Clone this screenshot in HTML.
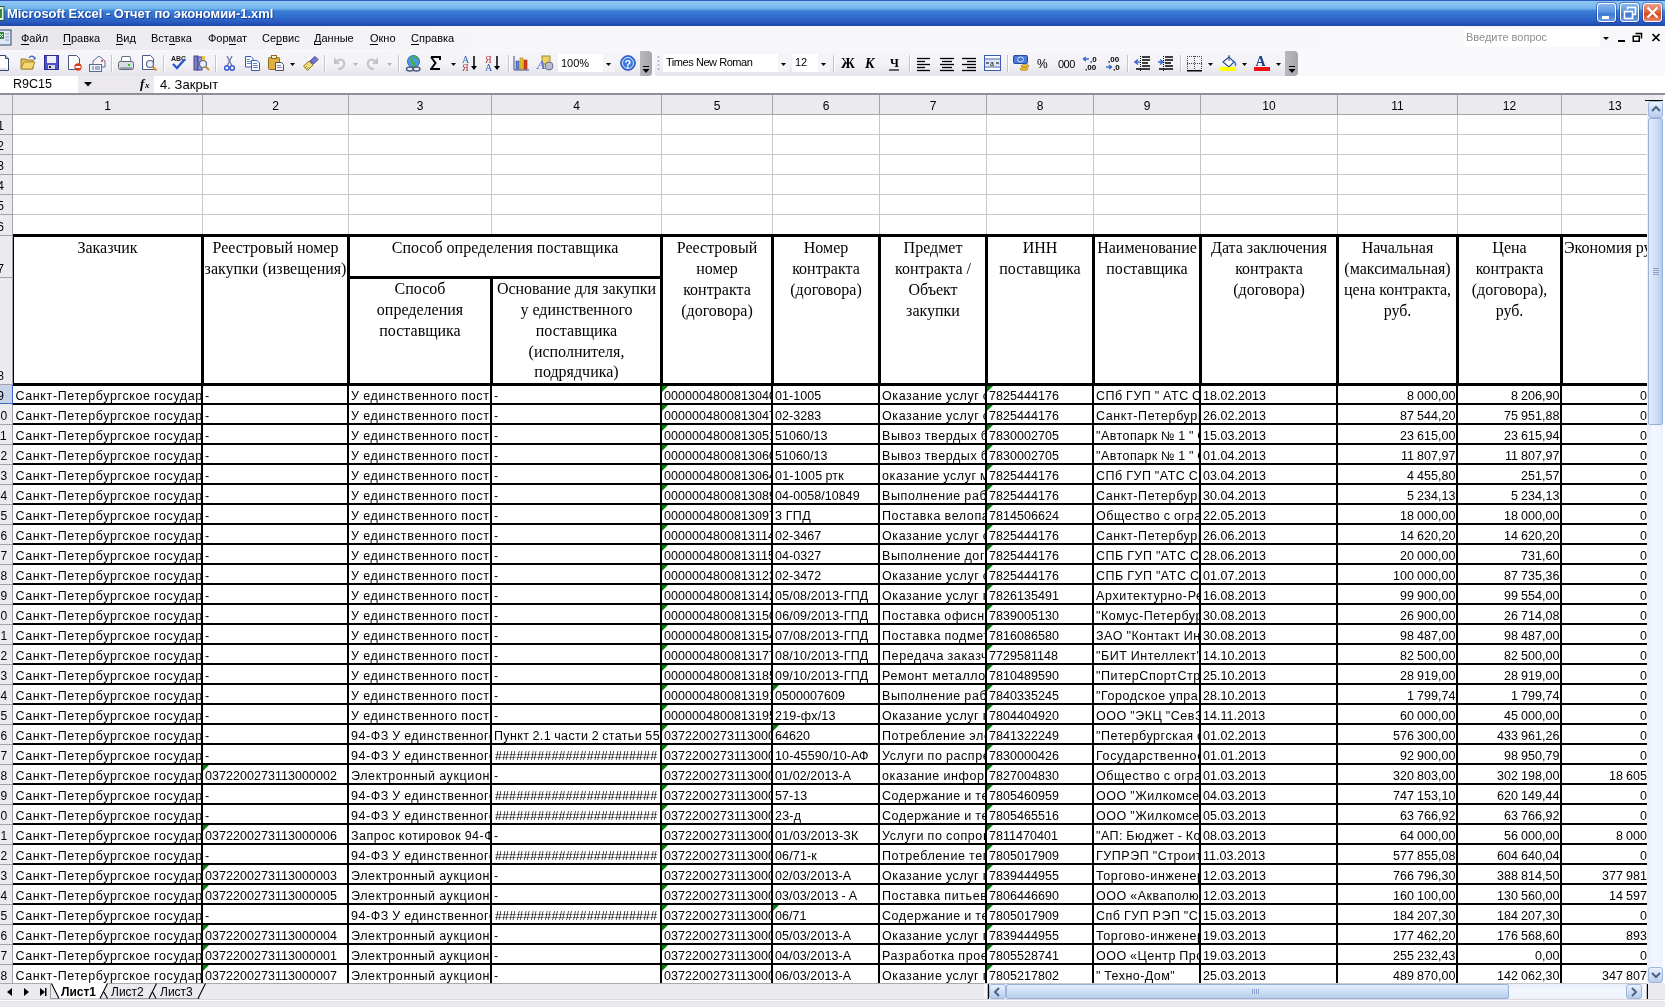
<!DOCTYPE html><html><head><meta charset="utf-8"><style>
html,body{margin:0;padding:0}
body{width:1665px;height:1007px;overflow:hidden;position:relative;background:#fff;will-change:transform;font-family:"Liberation Sans",sans-serif}
div{position:absolute;box-sizing:border-box}
svg{position:absolute}
</style></head><body>
<div style="left:0px;top:0px;width:1665px;height:26px;background:linear-gradient(#2d5cc0 0px,#2d5cc0 1px,#8ec6f3 1px,#7fbdf0 6px,#6cb0ea 9px,#4c90de 10px,#3a7fd8 11px,#3676d2 14px,#2f66c8 19px,#2a5bc0 22px,#2450b4 24px,#1f47a8 26px)"></div>
<svg style="left:0;top:6px" width="5" height="15"><rect x="-6" y="0.5" width="10" height="14" fill="#eaf2ea" stroke="#1f5f2f"/><rect x="-4" y="3" width="6" height="9" fill="#2e8b3e"/></svg>
<div style="left:7px;top:7.00px;font:bold 13px/13px 'Liberation Sans';color:#fff;white-space:nowrap;text-shadow:1px 1px 0 #1a3f95;letter-spacing:-0.05px">Microsoft Excel - Отчет по экономии-1.xml</div>
<div style="left:1597px;top:3px;width:19px;height:19px;background:linear-gradient(#8ab8ee,#5d97e0 45%,#3d78d4 60%,#6a9de0);border:1px solid #fff;border-radius:3px;box-shadow:0 0 0 1px rgba(30,60,150,.5)"></div>
<div style="left:1620px;top:3px;width:19px;height:19px;background:linear-gradient(#8ab8ee,#5d97e0 45%,#3d78d4 60%,#6a9de0);border:1px solid #fff;border-radius:3px;box-shadow:0 0 0 1px rgba(30,60,150,.5)"></div>
<div style="left:1643px;top:3px;width:19px;height:19px;background:linear-gradient(#e9a28a,#e06a47 45%,#d8461f 60%,#e98a6e);border:1px solid #fff;border-radius:3px;box-shadow:0 0 0 1px rgba(30,60,150,.5)"></div>
<svg style="left:1597px;top:3px" width="19" height="19"><rect x="5" y="13" width="7" height="3" fill="#fff"/></svg>
<svg style="left:1620px;top:3px" width="19" height="19"><rect x="4.5" y="8.5" width="8" height="7" fill="none" stroke="#fff" stroke-width="1.6"/><path d="M7.5 6.5V4.5h8v7h-2.5" fill="none" stroke="#fff" stroke-width="1.6"/></svg>
<svg style="left:1643px;top:3px" width="19" height="19"><path d="M4.5 4.5L14.5 14.5M14.5 4.5L4.5 14.5" stroke="#fff" stroke-width="2.2"/></svg>
<div style="left:0px;top:26px;width:1665px;height:24px;background:linear-gradient(90deg,#e7e5ea 0px,#f1f0f4 250px,#f7f6fa 520px,#f8f7fa 1665px)"></div>
<svg style="left:0;top:29px" width="13" height="18"><rect x="-3" y="1" width="14" height="15" fill="#dfe8f4" stroke="#31476f"/><rect x="-2" y="3" width="6" height="7" fill="#2e8b3e"/><path d="M0 5l3 3M3 5l-3 3" stroke="#fff"/><path d="M5 5h4M5 8h4M5 11h4" stroke="#8aa0c8"/></svg>
<div style="left:21px;top:32.69px;font:normal 11px/11px 'Liberation Sans';color:#000;white-space:nowrap;">Файл</div>
<div style="left:63px;top:32.69px;font:normal 11px/11px 'Liberation Sans';color:#000;white-space:nowrap;">Правка</div>
<div style="left:116px;top:32.69px;font:normal 11px/11px 'Liberation Sans';color:#000;white-space:nowrap;">Вид</div>
<div style="left:151px;top:32.69px;font:normal 11px/11px 'Liberation Sans';color:#000;white-space:nowrap;">Вставка</div>
<div style="left:208px;top:32.69px;font:normal 11px/11px 'Liberation Sans';color:#000;white-space:nowrap;">Формат</div>
<div style="left:262px;top:32.69px;font:normal 11px/11px 'Liberation Sans';color:#000;white-space:nowrap;">Сервис</div>
<div style="left:314px;top:32.69px;font:normal 11px/11px 'Liberation Sans';color:#000;white-space:nowrap;">Данные</div>
<div style="left:370px;top:32.69px;font:normal 11px/11px 'Liberation Sans';color:#000;white-space:nowrap;">Окно</div>
<div style="left:411px;top:32.69px;font:normal 11px/11px 'Liberation Sans';color:#000;white-space:nowrap;">Справка</div>
<div style="left:21px;top:44px;width:8px;height:1px;background:#000"></div>
<div style="left:63px;top:44px;width:8px;height:1px;background:#000"></div>
<div style="left:116px;top:44px;width:7px;height:1px;background:#000"></div>
<div style="left:169px;top:44px;width:6px;height:1px;background:#000"></div>
<div style="left:229px;top:44px;width:7px;height:1px;background:#000"></div>
<div style="left:276px;top:44px;width:6px;height:1px;background:#000"></div>
<div style="left:314px;top:44px;width:7px;height:1px;background:#000"></div>
<div style="left:370px;top:44px;width:8px;height:1px;background:#000"></div>
<div style="left:411px;top:44px;width:8px;height:1px;background:#000"></div>
<div style="left:1464px;top:29px;width:149px;height:18px;background:#fff"></div>
<div style="left:1600px;top:29px;width:13px;height:18px;background:#f7f6f9"></div>
<div style="left:1466px;top:31.69px;font:normal 11px/11px 'Liberation Sans';color:#8d8d8d;white-space:nowrap;">Введите вопрос</div>
<svg style="left:1600px;top:33px" width="12" height="10"><path d="M3 4h6l-3 3z" fill="#000"/></svg>
<svg style="left:1615px;top:30px" width="50" height="16"><rect x="3" y="10" width="7" height="2" fill="#000"/><path d="M20.5 3.5h6v5" fill="none" stroke="#000" stroke-width="1.5"/><rect x="18.25" y="6.25" width="6" height="5" fill="#f8f7fa" stroke="#000" stroke-width="1.5"/><path d="M37.5 4l7 7M44.5 4l-7 7" stroke="#000" stroke-width="1.7"/></svg>
<div style="left:0px;top:50px;width:1665px;height:26px;background:#f9f8fb"></div>
<div style="left:-10px;top:51px;width:662px;height:25px;background:linear-gradient(#f6f5f9,#f3f2f6 50%,#e4e3ea);border-radius:0 4px 4px 0"></div>
<div style="left:640px;top:51px;width:12px;height:25px;background:linear-gradient(90deg,#b9b8be,#a6a5ad);border-radius:0 4px 4px 0"></div>
<svg style="left:640px;top:62px" width="12" height="14"><path d="M3 4.5h6" stroke="#000"/><path d="M2.5 7h7l-3.5 4z" fill="#000"/></svg>
<div style="left:655px;top:51px;width:643px;height:25px;background:linear-gradient(#f6f5f9,#f3f2f6 50%,#e4e3ea);border-radius:3px 4px 4px 3px"></div>
<div style="left:1285px;top:51px;width:13px;height:25px;background:linear-gradient(90deg,#b9b8be,#a6a5ad);border-radius:0 4px 4px 0"></div>
<svg style="left:1286px;top:62px" width="12" height="14"><path d="M3 4.5h6" stroke="#000"/><path d="M2.5 7h7l-3.5 4z" fill="#000"/></svg>
<svg style="left:657px;top:55px" width="4" height="18"><path d="M1.5 1v2M1.5 5v2M1.5 9v2M1.5 13v2" stroke="#b0b0b8" stroke-width="1.5"/></svg>
<div style="left:111px;top:55px;width:1px;height:17px;background:#c5c4cc;box-shadow:1px 0 0 #fff"></div>
<div style="left:163px;top:55px;width:1px;height:17px;background:#c5c4cc;box-shadow:1px 0 0 #fff"></div>
<div style="left:215px;top:55px;width:1px;height:17px;background:#c5c4cc;box-shadow:1px 0 0 #fff"></div>
<div style="left:324px;top:55px;width:1px;height:17px;background:#c5c4cc;box-shadow:1px 0 0 #fff"></div>
<div style="left:398px;top:55px;width:1px;height:17px;background:#c5c4cc;box-shadow:1px 0 0 #fff"></div>
<div style="left:508px;top:55px;width:1px;height:17px;background:#c5c4cc;box-shadow:1px 0 0 #fff"></div>
<div style="left:833px;top:55px;width:1px;height:17px;background:#c5c4cc;box-shadow:1px 0 0 #fff"></div>
<div style="left:909px;top:55px;width:1px;height:17px;background:#c5c4cc;box-shadow:1px 0 0 #fff"></div>
<div style="left:1007px;top:55px;width:1px;height:17px;background:#c5c4cc;box-shadow:1px 0 0 #fff"></div>
<div style="left:1127px;top:55px;width:1px;height:17px;background:#c5c4cc;box-shadow:1px 0 0 #fff"></div>
<div style="left:1180px;top:55px;width:1px;height:17px;background:#c5c4cc;box-shadow:1px 0 0 #fff"></div>
<svg style="left:-6px;top:55px" width="16" height="16" viewBox="0 0 16 16"><path d="M1.5 .5h10l3 3v12h-13z" fill="#fff" stroke="#31456b"/><path d="M11.5 .5v3h3" fill="#dde" stroke="#31456b"/><path d="M3 14h10" stroke="#b8c4dc"/></svg>
<svg style="left:20px;top:55px" width="16" height="16" viewBox="0 0 16 16"><path d="M1 4h5l1 1h6v9H1z" fill="#e8c458" stroke="#9a7a2a"/><path d="M1 14l3-7h11l-3 7z" fill="#f6d872" stroke="#a88a32"/><path d="M9 3c2-3 5-2 6 1" fill="none" stroke="#3a6fc0" stroke-width="1.3"/><path d="M13 4l2 1 1-3" fill="#3a6fc0"/></svg>
<svg style="left:44px;top:55px" width="15" height="15" viewBox="0 0 15 15"><rect x=".5" y=".5" width="14" height="14" fill="#5050c8" stroke="#2c2c90"/><rect x="3" y="1" width="9" height="7" fill="#f0f0f8"/><rect x="4" y="10" width="7" height="4" fill="#d8d8e8"/><rect x="5" y="11" width="2" height="2" fill="#222"/></svg>
<svg style="left:68px;top:55px" width="15" height="16" viewBox="0 0 15 16"><path d="M.5 .5h8l3 3v11H.5z" fill="#fff" stroke="#4a5a80"/><circle cx="10" cy="12" r="3.7" fill="#d83a1a"/><rect x="7.5" y="11" width="5" height="2" fill="#fff"/></svg>
<svg style="left:89px;top:55px" width="17" height="17" viewBox="0 0 17 17"><path d="M4 6l6-5 6 5v6H4z" fill="#f4f4f8" stroke="#6070a0"/><circle cx="13" cy="6" r="1" fill="#e02020"/><rect x=".5" y="9.5" width="12" height="7" fill="#eef2fa" stroke="#5a6a98"/><path d="M3 12h2M6 12h5M3 14h2M6 14h5" stroke="#5a6a98"/></svg>
<svg style="left:118px;top:56px" width="16" height="15" viewBox="0 0 16 15"><path d="M4 .5h8l1 5H3z" fill="#fff" stroke="#6a7280"/><rect x=".5" y="5.5" width="15" height="8" rx="2" fill="#d8dde6" stroke="#5b6472"/><rect x="2" y="11" width="12" height="2" fill="#9aa3b0"/><rect x="10" y="8" width="2" height="2" fill="#22cc22"/></svg>
<svg style="left:142px;top:55px" width="16" height="16" viewBox="0 0 16 16"><path d="M.5 .5h8l3 3v11H.5z" fill="#fff" stroke="#4a5a80"/><circle cx="8" cy="9" r="3.5" fill="#e8f0f8" stroke="#5a6a8a" stroke-width="1.2"/><path d="M10.5 11.5l4 4" stroke="#d09030" stroke-width="2"/></svg>
<svg style="left:170px;top:54px" width="17" height="17" viewBox="0 0 17 17"><text x="1" y="7" font-family="Liberation Sans" font-size="7" font-weight="bold" fill="#222">ABC</text><path d="M3 10l4 4 8-9" fill="none" stroke="#2a5ac8" stroke-width="2.4"/></svg>
<svg style="left:193px;top:55px" width="17" height="16" viewBox="0 0 17 16"><rect x="1" y="1" width="4" height="14" fill="#7c7cc8" stroke="#44448a"/><rect x="5" y="2" width="4" height="13" fill="#9c9ce0" stroke="#44448a"/><rect x="9" y="1" width="3" height="6" fill="#e8c458"/><circle cx="10" cy="9" r="3.5" fill="#e8f0f8" stroke="#5a6a8a" stroke-width="1.2"/><path d="M12.5 11.5l3.5 3.5" stroke="#d09030" stroke-width="2"/></svg>
<svg style="left:224px;top:55px" width="11" height="16" viewBox="0 0 11 16"><path d="M3 1l5 10M8 1L3 11" stroke="#6a7a98" stroke-width="1.3"/><circle cx="2.8" cy="13" r="2.2" fill="none" stroke="#3a5ad0" stroke-width="1.5"/><circle cx="8.2" cy="13" r="2.2" fill="none" stroke="#3a5ad0" stroke-width="1.5"/></svg>
<svg style="left:245px;top:56px" width="16" height="15" viewBox="0 0 16 15"><path d="M.5 .5h5.5l2 2v8.5h-7.5z" fill="#fff" stroke="#3a5ab8"/><path d="M6.5 4.5h5.5l2.5 2.5v7.5h-8z" fill="#fff" stroke="#3a5ab8"/><path d="M2 3.5h3M2 5.5h4M2 7.5h4M8 7.5h4M8 9.5h5M8 11.5h5" stroke="#5a80e0"/></svg>
<svg style="left:268px;top:55px" width="17" height="16" viewBox="0 0 17 16"><rect x=".5" y="2.5" width="11" height="12" rx="1" fill="#e0b040" stroke="#8a6a20"/><rect x="3.5" y=".5" width="5" height="3" fill="#f8f0d0" stroke="#8a6a20"/><path d="M7.5 7.5h6l2 2v6h-8z" fill="#f8f8fc" stroke="#50505a"/><path d="M9 10.5h4M9 12.5h5" stroke="#7a8aa8"/></svg>
<svg style="left:290px;top:63px" width="6" height="4" viewBox="0 0 6 4"><path d="M0 0h5l-2.5 3z" fill="#000"/></svg>
<svg style="left:302px;top:55px" width="17" height="16" viewBox="0 0 17 16"><path d="M1.5 11l5.5-5 4 4-5.5 5.5z" fill="#f0dc78" stroke="#8a7a30"/><path d="M8 6l5-4.5 3 3L11.5 9z" fill="#7878d0" stroke="#404090"/><path d="M3 13l2-2M5 14l2-2" stroke="#c0a040"/></svg>
<svg style="left:333px;top:56px" width="13" height="14" viewBox="0 0 13 14"><path d="M4 5c4-3 8-1 7 4-1 3-4 4-6 4" fill="none" stroke="#c4c4ca" stroke-width="2.2"/><path d="M1 1v7h6z" fill="#c4c4ca"/></svg>
<svg style="left:353px;top:63px" width="6" height="4" viewBox="0 0 6 4"><path d="M0 0h5l-2.5 3z" fill="#b4b4ba"/></svg>
<svg style="left:366px;top:56px" width="13" height="14" viewBox="0 0 13 14"><path d="M9 5C5 2 1 4 2 9c1 3 4 4 6 4" fill="none" stroke="#c4c4ca" stroke-width="2.2"/><path d="M12 1v7H6z" fill="#c4c4ca"/></svg>
<svg style="left:387px;top:63px" width="6" height="4" viewBox="0 0 6 4"><path d="M0 0h5l-2.5 3z" fill="#b4b4ba"/></svg>
<svg style="left:405px;top:55px" width="17" height="17" viewBox="0 0 17 17"><circle cx="8.5" cy="6.5" r="6" fill="#4a9ae8" stroke="#2a6ab0"/><path d="M4 2.5c2 0 3 2 2.5 3.5S8 8 9.5 8.5 9 11 8 12M9 1.5c2 .5 3.5 2 3 3.5" fill="none" stroke="#4cb040" stroke-width="2.2"/><ellipse cx="5" cy="14" rx="3.5" ry="2" fill="none" stroke="#4a5a80" stroke-width="1.4"/><ellipse cx="11.5" cy="14" rx="3.5" ry="2" fill="none" stroke="#4a5a80" stroke-width="1.4"/></svg>
<svg style="left:430px;top:56px" width="11" height="14" viewBox="0 0 11 14"><path d="M1 1h9v3M10 13H1l4.5-6L1 1" fill="none" stroke="#000" stroke-width="2"/></svg>
<svg style="left:451px;top:63px" width="6" height="4" viewBox="0 0 6 4"><path d="M0 0h5l-2.5 3z" fill="#000"/></svg>
<svg style="left:462px;top:55px" width="17" height="17" viewBox="0 0 17 17"><text x="0" y="7.5" font-family="Liberation Serif" font-size="10" fill="#3060b0">A</text><text x="0" y="16" font-family="Liberation Serif" font-size="10" fill="#b04040">Я</text><path d="M12 1v13" stroke="#000" stroke-width="1.5"/><path d="M9 11l3 4 3-4z" fill="#000"/></svg>
<svg style="left:485px;top:55px" width="17" height="17" viewBox="0 0 17 17"><text x="0" y="7.5" font-family="Liberation Serif" font-size="10" fill="#b04040">Я</text><text x="0" y="16" font-family="Liberation Serif" font-size="10" fill="#3060b0">A</text><path d="M12 1v13" stroke="#000" stroke-width="1.5"/><path d="M9 11l3 4 3-4z" fill="#000"/></svg>
<svg style="left:513px;top:55px" width="17" height="16" viewBox="0 0 17 16"><path d="M1 1v14h15" fill="none" stroke="#3a4a8a"/><rect x="3" y="6" width="3" height="8" fill="#5a8ad8" stroke="#2a4a90" stroke-width=".6"/><rect x="7" y="3" width="3" height="11" fill="#f0c030" stroke="#a07a10" stroke-width=".6"/><rect x="11" y="5" width="3" height="9" fill="#d84020" stroke="#902010" stroke-width=".6"/></svg>
<svg style="left:536px;top:55px" width="18" height="16" viewBox="0 0 18 16"><rect x="6" y="1" width="8" height="8" fill="#f0d060" stroke="#a08a30"/><text x="1" y="14" font-family="Liberation Serif" font-style="italic" font-weight="bold" font-size="13" fill="#6070c8">A</text><ellipse cx="13" cy="11" rx="4" ry="4" fill="#b8c0d0" stroke="#6a7080"/></svg>
<div style="left:558px;top:54px;width:57px;height:18px;background:#fff"></div>
<div style="left:603px;top:54px;width:12px;height:18px;background:#f4f3f7"></div>
<div style="left:561px;top:57.69px;font:normal 11px/11px 'Liberation Sans';color:#000;white-space:nowrap;">100%</div>
<svg style="left:606px;top:63px" width="6" height="4" viewBox="0 0 6 4"><path d="M0 0h5l-2.5 3z" fill="#000"/></svg>
<svg style="left:620px;top:55px" width="16" height="16" viewBox="0 0 16 16"><circle cx="8" cy="8" r="7.3" fill="#3a7ae0" stroke="#1a4ab0"/><circle cx="8" cy="8" r="5.5" fill="none" stroke="#fff" stroke-width=".8"/><text x="4.6" y="12.5" font-family="Liberation Sans" font-weight="bold" font-size="11" fill="#fff">?</text></svg>
<div style="left:663px;top:54px;width:126px;height:18px;background:#fff"></div>
<div style="left:778px;top:54px;width:11px;height:18px;background:#f4f3f7"></div>
<div style="left:666px;top:56.69px;font:normal 11px/11px 'Liberation Sans';color:#000;white-space:nowrap;letter-spacing:-0.45px">Times New Roman</div>
<svg style="left:781px;top:63px" width="6" height="4" viewBox="0 0 6 4"><path d="M0 0h5l-2.5 3z" fill="#000"/></svg>
<div style="left:792px;top:54px;width:38px;height:18px;background:#fff"></div>
<div style="left:818px;top:54px;width:12px;height:18px;background:#f4f3f7"></div>
<div style="left:795px;top:56.69px;font:normal 11px/11px 'Liberation Sans';color:#000;white-space:nowrap;">12</div>
<svg style="left:821px;top:63px" width="6" height="4" viewBox="0 0 6 4"><path d="M0 0h5l-2.5 3z" fill="#000"/></svg>
<svg style="left:841px;top:56px" width="15" height="14" viewBox="0 0 15 14"><text x="0" y="12" font-family="Liberation Serif" font-weight="bold" font-size="14" fill="#000">Ж</text></svg>
<svg style="left:865px;top:56px" width="13" height="14" viewBox="0 0 13 14"><text x="0" y="12" font-family="Liberation Serif" font-weight="bold" font-style="italic" font-size="14" fill="#000">К</text></svg>
<svg style="left:889px;top:56px" width="11" height="15" viewBox="0 0 11 15"><text x="1" y="11" font-family="Liberation Serif" font-weight="bold" font-size="12" fill="#000">Ч</text><path d="M0 14h10" stroke="#000" stroke-width="1.2"/></svg>
<svg style="left:916px;top:56px" width="16" height="16" viewBox="0 0 16 16"><path d="M1 2.5H14" stroke="#000" stroke-width="1.3"/><path d="M1 5.5H9" stroke="#000" stroke-width="1.3"/><path d="M1 8.5H14" stroke="#000" stroke-width="1.3"/><path d="M1 11.5H9" stroke="#000" stroke-width="1.3"/><path d="M1 14.5H14" stroke="#000" stroke-width="1.3"/></svg>
<svg style="left:939px;top:56px" width="16" height="16" viewBox="0 0 16 16"><path d="M1 2.5H15" stroke="#000" stroke-width="1.3"/><path d="M3 5.5H13" stroke="#000" stroke-width="1.3"/><path d="M1 8.5H15" stroke="#000" stroke-width="1.3"/><path d="M3 11.5H13" stroke="#000" stroke-width="1.3"/><path d="M1 14.5H15" stroke="#000" stroke-width="1.3"/></svg>
<svg style="left:961px;top:56px" width="16" height="16" viewBox="0 0 16 16"><path d="M1 2.5H15" stroke="#000" stroke-width="1.3"/><path d="M6 5.5H15" stroke="#000" stroke-width="1.3"/><path d="M1 8.5H15" stroke="#000" stroke-width="1.3"/><path d="M6 11.5H15" stroke="#000" stroke-width="1.3"/><path d="M1 14.5H15" stroke="#000" stroke-width="1.3"/></svg>
<svg style="left:984px;top:55px" width="17" height="16" viewBox="0 0 17 16"><rect x=".5" y=".5" width="16" height="15" fill="#fff" stroke="#3a5ab0"/><path d="M1 4h15M1 12h15" stroke="#3a5ab0"/><rect x="1" y="5" width="15" height="6" fill="#dde6f8"/><text x="6" y="10.5" font-family="Liberation Sans" font-size="7" fill="#000">a</text><path d="M2 8h3M12 8h3" stroke="#000"/></svg>
<svg style="left:1013px;top:55px" width="17" height="17" viewBox="0 0 17 17"><rect x=".5" y=".5" width="14" height="8" rx="1" fill="#4a7ad8" stroke="#2a4aa0"/><ellipse cx="7.5" cy="4.5" rx="3" ry="2.5" fill="none" stroke="#cfe0ff"/><ellipse cx="12" cy="11" rx="4" ry="1.5" fill="#f0c030" stroke="#a07a10" stroke-width=".6"/><ellipse cx="11" cy="14" rx="4" ry="1.5" fill="#f0c030" stroke="#a07a10" stroke-width=".6"/></svg>
<div style="left:1037px;top:57.84px;font:normal 12px/12px 'Liberation Sans';color:#000;white-space:nowrap;">%</div>
<div style="left:1058px;top:58.69px;font:normal 11px/11px 'Liberation Sans';color:#000;white-space:nowrap;letter-spacing:-0.5px">000</div>
<svg style="left:1082px;top:55px" width="16" height="16" viewBox="0 0 16 16"><text x="8" y="7" font-family="Liberation Sans" font-size="8" font-weight="bold" fill="#000">,0</text><text x="3" y="15" font-family="Liberation Sans" font-size="8" font-weight="bold" fill="#000">,00</text><path d="M1 4h6M1 4l3-2M1 4l3 2" stroke="#3a6ad0" stroke-width="1.3" fill="none"/></svg>
<svg style="left:1105px;top:55px" width="16" height="16" viewBox="0 0 16 16"><text x="3" y="7" font-family="Liberation Sans" font-size="8" font-weight="bold" fill="#000">,00</text><text x="8" y="15" font-family="Liberation Sans" font-size="8" font-weight="bold" fill="#000">,0</text><path d="M1 12h6M7 12l-3-2M7 12l-3 2" stroke="#3a6ad0" stroke-width="1.3" fill="none"/></svg>
<svg style="left:1134px;top:55px" width="17" height="16" viewBox="0 0 17 16"><path d="M8 2h8M8 5h8M8 8h6M8 11h8M2 14h14" stroke="#000" stroke-width="1.3"/><path d="M6 7H1l3-2.5M1 7l3 2.5" stroke="#3a6ad0" stroke-width="1.5" fill="none"/><path d="M6.5 1v15" stroke="#000" stroke-dasharray="1 1"/></svg>
<svg style="left:1157px;top:55px" width="17" height="16" viewBox="0 0 17 16"><path d="M8 2h8M8 5h8M8 8h6M8 11h8M2 14h14" stroke="#000" stroke-width="1.3"/><path d="M1 7h5L3 4.5M6 7l-3 2.5" stroke="#3a6ad0" stroke-width="1.5" fill="none"/><path d="M6.5 1v15" stroke="#000" stroke-dasharray="1 1"/></svg>
<svg style="left:1187px;top:56px" width="15" height="16" viewBox="0 0 15 16"><rect x="0" y="0" width="1" height="1" fill="#444"/><rect x="0" y="0" width="1" height="1" fill="#444"/><rect x="7" y="0" width="1" height="1" fill="#444"/><rect x="0" y="7" width="1" height="1" fill="#444"/><rect x="14" y="0" width="1" height="1" fill="#444"/><rect x="0" y="14" width="1" height="1" fill="#444"/><rect x="0" y="2" width="1" height="1" fill="#444"/><rect x="2" y="0" width="1" height="1" fill="#444"/><rect x="7" y="2" width="1" height="1" fill="#444"/><rect x="2" y="7" width="1" height="1" fill="#444"/><rect x="14" y="2" width="1" height="1" fill="#444"/><rect x="2" y="14" width="1" height="1" fill="#444"/><rect x="0" y="4" width="1" height="1" fill="#444"/><rect x="4" y="0" width="1" height="1" fill="#444"/><rect x="7" y="4" width="1" height="1" fill="#444"/><rect x="4" y="7" width="1" height="1" fill="#444"/><rect x="14" y="4" width="1" height="1" fill="#444"/><rect x="4" y="14" width="1" height="1" fill="#444"/><rect x="0" y="6" width="1" height="1" fill="#444"/><rect x="6" y="0" width="1" height="1" fill="#444"/><rect x="7" y="6" width="1" height="1" fill="#444"/><rect x="6" y="7" width="1" height="1" fill="#444"/><rect x="14" y="6" width="1" height="1" fill="#444"/><rect x="6" y="14" width="1" height="1" fill="#444"/><rect x="0" y="8" width="1" height="1" fill="#444"/><rect x="8" y="0" width="1" height="1" fill="#444"/><rect x="7" y="8" width="1" height="1" fill="#444"/><rect x="8" y="7" width="1" height="1" fill="#444"/><rect x="14" y="8" width="1" height="1" fill="#444"/><rect x="8" y="14" width="1" height="1" fill="#444"/><rect x="0" y="10" width="1" height="1" fill="#444"/><rect x="10" y="0" width="1" height="1" fill="#444"/><rect x="7" y="10" width="1" height="1" fill="#444"/><rect x="10" y="7" width="1" height="1" fill="#444"/><rect x="14" y="10" width="1" height="1" fill="#444"/><rect x="10" y="14" width="1" height="1" fill="#444"/><rect x="0" y="12" width="1" height="1" fill="#444"/><rect x="12" y="0" width="1" height="1" fill="#444"/><rect x="7" y="12" width="1" height="1" fill="#444"/><rect x="12" y="7" width="1" height="1" fill="#444"/><rect x="14" y="12" width="1" height="1" fill="#444"/><rect x="12" y="14" width="1" height="1" fill="#444"/><rect x="0" y="14" width="1" height="1" fill="#444"/><rect x="14" y="0" width="1" height="1" fill="#444"/><rect x="7" y="14" width="1" height="1" fill="#444"/><rect x="14" y="7" width="1" height="1" fill="#444"/><rect x="14" y="14" width="1" height="1" fill="#444"/><rect x="14" y="14" width="1" height="1" fill="#444"/><rect x="0" y="14" width="15" height="1.5" fill="#000"/></svg>
<svg style="left:1208px;top:63px" width="6" height="4" viewBox="0 0 6 4"><path d="M0 0h5l-2.5 3z" fill="#000"/></svg>
<svg style="left:1220px;top:54px" width="17" height="17" viewBox="0 0 17 17"><path d="M3 8l6-5 5 5-5 5z" fill="#fff" stroke="#2a4a90" stroke-width="1.2"/><path d="M9 1v6" stroke="#2a4a90"/><path d="M13 7c3 1 3 4 2 5" stroke="#3a70d8" stroke-width="1.5" fill="none"/><rect x="0" y="13" width="16" height="4" fill="#ffff00"/></svg>
<svg style="left:1242px;top:63px" width="6" height="4" viewBox="0 0 6 4"><path d="M0 0h5l-2.5 3z" fill="#000"/></svg>
<svg style="left:1254px;top:54px" width="17" height="17" viewBox="0 0 17 17"><text x="1.5" y="12" font-family="Liberation Serif" font-weight="bold" font-size="14" fill="#1a3a8a">A</text><rect x="0" y="13" width="16" height="4" fill="#ee1111"/></svg>
<svg style="left:1276px;top:63px" width="6" height="4" viewBox="0 0 6 4"><path d="M0 0h5l-2.5 3z" fill="#000"/></svg>
<div style="left:0px;top:76px;width:1665px;height:17px;background:#fff"></div>
<div style="left:78px;top:76px;width:76px;height:17px;background:#ebe9ee"></div>
<div style="left:13px;top:78.02px;font:normal 12.5px/12.5px 'Liberation Sans';color:#000;white-space:nowrap;">R9C15</div>
<svg style="left:84px;top:82px" width="9" height="6" viewBox="0 0 9 6"><path d="M0 0h8l-4 4.5z" fill="#000"/></svg>
<svg style="left:140px;top:77px" width="13" height="14" viewBox="0 0 13 14"><text x="0" y="11" font-family="Liberation Serif" font-style="italic" font-weight="bold" font-size="13" fill="#000">f</text><text x="5" y="11" font-family="Liberation Serif" font-style="italic" font-weight="bold" font-size="9" fill="#000">x</text></svg>
<div style="left:160px;top:77.60px;font:normal 13px/13px 'Liberation Sans';color:#000;white-space:nowrap;letter-spacing:0.05px">4. Закрыт</div>
<div style="left:0px;top:93px;width:1665px;height:2px;background:#8f8f95"></div>
<div style="left:0px;top:95px;width:1647px;height:19px;background:#ebeaee"></div>
<div style="left:0px;top:114px;width:1647px;height:1px;background:#a3a3a8"></div>
<div style="left:202px;top:95px;width:1px;height:19px;background:#a3a3a8"></div>
<div style="left:13px;top:98.5px;width:189px;height:14px;font:12px/14px 'Liberation Sans';text-align:center;color:#000">1</div>
<div style="left:348px;top:95px;width:1px;height:19px;background:#a3a3a8"></div>
<div style="left:203px;top:98.5px;width:145px;height:14px;font:12px/14px 'Liberation Sans';text-align:center;color:#000">2</div>
<div style="left:491px;top:95px;width:1px;height:19px;background:#a3a3a8"></div>
<div style="left:349px;top:98.5px;width:142px;height:14px;font:12px/14px 'Liberation Sans';text-align:center;color:#000">3</div>
<div style="left:661px;top:95px;width:1px;height:19px;background:#a3a3a8"></div>
<div style="left:492px;top:98.5px;width:169px;height:14px;font:12px/14px 'Liberation Sans';text-align:center;color:#000">4</div>
<div style="left:772px;top:95px;width:1px;height:19px;background:#a3a3a8"></div>
<div style="left:662px;top:98.5px;width:110px;height:14px;font:12px/14px 'Liberation Sans';text-align:center;color:#000">5</div>
<div style="left:879px;top:95px;width:1px;height:19px;background:#a3a3a8"></div>
<div style="left:773px;top:98.5px;width:106px;height:14px;font:12px/14px 'Liberation Sans';text-align:center;color:#000">6</div>
<div style="left:986px;top:95px;width:1px;height:19px;background:#a3a3a8"></div>
<div style="left:880px;top:98.5px;width:106px;height:14px;font:12px/14px 'Liberation Sans';text-align:center;color:#000">7</div>
<div style="left:1093px;top:95px;width:1px;height:19px;background:#a3a3a8"></div>
<div style="left:987px;top:98.5px;width:106px;height:14px;font:12px/14px 'Liberation Sans';text-align:center;color:#000">8</div>
<div style="left:1200px;top:95px;width:1px;height:19px;background:#a3a3a8"></div>
<div style="left:1094px;top:98.5px;width:106px;height:14px;font:12px/14px 'Liberation Sans';text-align:center;color:#000">9</div>
<div style="left:1337px;top:95px;width:1px;height:19px;background:#a3a3a8"></div>
<div style="left:1201px;top:98.5px;width:136px;height:14px;font:12px/14px 'Liberation Sans';text-align:center;color:#000">10</div>
<div style="left:1457px;top:95px;width:1px;height:19px;background:#a3a3a8"></div>
<div style="left:1338px;top:98.5px;width:119px;height:14px;font:12px/14px 'Liberation Sans';text-align:center;color:#000">11</div>
<div style="left:1561px;top:95px;width:1px;height:19px;background:#a3a3a8"></div>
<div style="left:1458px;top:98.5px;width:103px;height:14px;font:12px/14px 'Liberation Sans';text-align:center;color:#000">12</div>
<div style="left:1562px;top:98.5px;width:106px;height:14px;font:12px/14px 'Liberation Sans';text-align:center;color:#000">13</div>
<div style="left:12px;top:95px;width:1px;height:19px;background:#a3a3a8"></div>
<div style="left:0px;top:115px;width:12px;height:868px;background:#ebeaee"></div>
<div style="left:12px;top:115px;width:1px;height:868px;background:#a3a3a8"></div>
<div style="left:0px;top:385px;width:12px;height:19px;background:#c7d3e9"></div>
<div style="left:12px;top:385px;width:1px;height:20px;background:#3d6ac6"></div>
<div style="left:0px;top:403px;width:13px;height:1px;background:#3d6ac6"></div>
<div style="left:0px;top:134px;width:12px;height:1px;background:#a3a3a8"></div>
<div style="left:-12.5px;top:119.0px;width:26px;height:14px;font:12px/14px 'Liberation Sans';text-align:center;color:#000;overflow:visible">1</div>
<div style="left:0px;top:154px;width:12px;height:1px;background:#a3a3a8"></div>
<div style="left:-12.5px;top:139.0px;width:26px;height:14px;font:12px/14px 'Liberation Sans';text-align:center;color:#000;overflow:visible">2</div>
<div style="left:0px;top:174px;width:12px;height:1px;background:#a3a3a8"></div>
<div style="left:-12.5px;top:159.0px;width:26px;height:14px;font:12px/14px 'Liberation Sans';text-align:center;color:#000;overflow:visible">3</div>
<div style="left:0px;top:194px;width:12px;height:1px;background:#a3a3a8"></div>
<div style="left:-12.5px;top:179.0px;width:26px;height:14px;font:12px/14px 'Liberation Sans';text-align:center;color:#000;overflow:visible">4</div>
<div style="left:0px;top:214px;width:12px;height:1px;background:#a3a3a8"></div>
<div style="left:-12.5px;top:199.0px;width:26px;height:14px;font:12px/14px 'Liberation Sans';text-align:center;color:#000;overflow:visible">5</div>
<div style="left:0px;top:235px;width:12px;height:1px;background:#a3a3a8"></div>
<div style="left:-12.5px;top:220.0px;width:26px;height:14px;font:12px/14px 'Liberation Sans';text-align:center;color:#000;overflow:visible">6</div>
<div style="left:0px;top:277px;width:12px;height:1px;background:#a3a3a8"></div>
<div style="left:-12.5px;top:262.0px;width:26px;height:14px;font:12px/14px 'Liberation Sans';text-align:center;color:#000;overflow:visible">7</div>
<div style="left:0px;top:384px;width:12px;height:1px;background:#a3a3a8"></div>
<div style="left:-12.5px;top:369.0px;width:26px;height:14px;font:12px/14px 'Liberation Sans';text-align:center;color:#000;overflow:visible">8</div>
<div style="left:-12.5px;top:389.0px;width:26px;height:14px;font:12px/14px 'Liberation Sans';text-align:center;color:#000;overflow:visible">9</div>
<div style="left:0px;top:424px;width:12px;height:1px;background:#a3a3a8"></div>
<div style="left:-12.5px;top:409.0px;width:26px;height:14px;font:12px/14px 'Liberation Sans';text-align:center;color:#000;overflow:visible">10</div>
<div style="left:0px;top:444px;width:12px;height:1px;background:#a3a3a8"></div>
<div style="left:-12.5px;top:429.0px;width:26px;height:14px;font:12px/14px 'Liberation Sans';text-align:center;color:#000;overflow:visible">11</div>
<div style="left:0px;top:464px;width:12px;height:1px;background:#a3a3a8"></div>
<div style="left:-12.5px;top:449.0px;width:26px;height:14px;font:12px/14px 'Liberation Sans';text-align:center;color:#000;overflow:visible">12</div>
<div style="left:0px;top:484px;width:12px;height:1px;background:#a3a3a8"></div>
<div style="left:-12.5px;top:469.0px;width:26px;height:14px;font:12px/14px 'Liberation Sans';text-align:center;color:#000;overflow:visible">13</div>
<div style="left:0px;top:504px;width:12px;height:1px;background:#a3a3a8"></div>
<div style="left:-12.5px;top:489.0px;width:26px;height:14px;font:12px/14px 'Liberation Sans';text-align:center;color:#000;overflow:visible">14</div>
<div style="left:0px;top:524px;width:12px;height:1px;background:#a3a3a8"></div>
<div style="left:-12.5px;top:509.0px;width:26px;height:14px;font:12px/14px 'Liberation Sans';text-align:center;color:#000;overflow:visible">15</div>
<div style="left:0px;top:544px;width:12px;height:1px;background:#a3a3a8"></div>
<div style="left:-12.5px;top:529.0px;width:26px;height:14px;font:12px/14px 'Liberation Sans';text-align:center;color:#000;overflow:visible">16</div>
<div style="left:0px;top:564px;width:12px;height:1px;background:#a3a3a8"></div>
<div style="left:-12.5px;top:549.0px;width:26px;height:14px;font:12px/14px 'Liberation Sans';text-align:center;color:#000;overflow:visible">17</div>
<div style="left:0px;top:584px;width:12px;height:1px;background:#a3a3a8"></div>
<div style="left:-12.5px;top:569.0px;width:26px;height:14px;font:12px/14px 'Liberation Sans';text-align:center;color:#000;overflow:visible">18</div>
<div style="left:0px;top:604px;width:12px;height:1px;background:#a3a3a8"></div>
<div style="left:-12.5px;top:589.0px;width:26px;height:14px;font:12px/14px 'Liberation Sans';text-align:center;color:#000;overflow:visible">19</div>
<div style="left:0px;top:624px;width:12px;height:1px;background:#a3a3a8"></div>
<div style="left:-12.5px;top:609.0px;width:26px;height:14px;font:12px/14px 'Liberation Sans';text-align:center;color:#000;overflow:visible">20</div>
<div style="left:0px;top:644px;width:12px;height:1px;background:#a3a3a8"></div>
<div style="left:-12.5px;top:629.0px;width:26px;height:14px;font:12px/14px 'Liberation Sans';text-align:center;color:#000;overflow:visible">21</div>
<div style="left:0px;top:664px;width:12px;height:1px;background:#a3a3a8"></div>
<div style="left:-12.5px;top:649.0px;width:26px;height:14px;font:12px/14px 'Liberation Sans';text-align:center;color:#000;overflow:visible">22</div>
<div style="left:0px;top:684px;width:12px;height:1px;background:#a3a3a8"></div>
<div style="left:-12.5px;top:669.0px;width:26px;height:14px;font:12px/14px 'Liberation Sans';text-align:center;color:#000;overflow:visible">23</div>
<div style="left:0px;top:704px;width:12px;height:1px;background:#a3a3a8"></div>
<div style="left:-12.5px;top:689.0px;width:26px;height:14px;font:12px/14px 'Liberation Sans';text-align:center;color:#000;overflow:visible">24</div>
<div style="left:0px;top:724px;width:12px;height:1px;background:#a3a3a8"></div>
<div style="left:-12.5px;top:709.0px;width:26px;height:14px;font:12px/14px 'Liberation Sans';text-align:center;color:#000;overflow:visible">25</div>
<div style="left:0px;top:744px;width:12px;height:1px;background:#a3a3a8"></div>
<div style="left:-12.5px;top:729.0px;width:26px;height:14px;font:12px/14px 'Liberation Sans';text-align:center;color:#000;overflow:visible">26</div>
<div style="left:0px;top:764px;width:12px;height:1px;background:#a3a3a8"></div>
<div style="left:-12.5px;top:749.0px;width:26px;height:14px;font:12px/14px 'Liberation Sans';text-align:center;color:#000;overflow:visible">27</div>
<div style="left:0px;top:784px;width:12px;height:1px;background:#a3a3a8"></div>
<div style="left:-12.5px;top:769.0px;width:26px;height:14px;font:12px/14px 'Liberation Sans';text-align:center;color:#000;overflow:visible">28</div>
<div style="left:0px;top:804px;width:12px;height:1px;background:#a3a3a8"></div>
<div style="left:-12.5px;top:789.0px;width:26px;height:14px;font:12px/14px 'Liberation Sans';text-align:center;color:#000;overflow:visible">29</div>
<div style="left:0px;top:824px;width:12px;height:1px;background:#a3a3a8"></div>
<div style="left:-12.5px;top:809.0px;width:26px;height:14px;font:12px/14px 'Liberation Sans';text-align:center;color:#000;overflow:visible">30</div>
<div style="left:0px;top:844px;width:12px;height:1px;background:#a3a3a8"></div>
<div style="left:-12.5px;top:829.0px;width:26px;height:14px;font:12px/14px 'Liberation Sans';text-align:center;color:#000;overflow:visible">31</div>
<div style="left:0px;top:864px;width:12px;height:1px;background:#a3a3a8"></div>
<div style="left:-12.5px;top:849.0px;width:26px;height:14px;font:12px/14px 'Liberation Sans';text-align:center;color:#000;overflow:visible">32</div>
<div style="left:0px;top:884px;width:12px;height:1px;background:#a3a3a8"></div>
<div style="left:-12.5px;top:869.0px;width:26px;height:14px;font:12px/14px 'Liberation Sans';text-align:center;color:#000;overflow:visible">33</div>
<div style="left:0px;top:904px;width:12px;height:1px;background:#a3a3a8"></div>
<div style="left:-12.5px;top:889.0px;width:26px;height:14px;font:12px/14px 'Liberation Sans';text-align:center;color:#000;overflow:visible">34</div>
<div style="left:0px;top:924px;width:12px;height:1px;background:#a3a3a8"></div>
<div style="left:-12.5px;top:909.0px;width:26px;height:14px;font:12px/14px 'Liberation Sans';text-align:center;color:#000;overflow:visible">35</div>
<div style="left:0px;top:944px;width:12px;height:1px;background:#a3a3a8"></div>
<div style="left:-12.5px;top:929.0px;width:26px;height:14px;font:12px/14px 'Liberation Sans';text-align:center;color:#000;overflow:visible">36</div>
<div style="left:0px;top:964px;width:12px;height:1px;background:#a3a3a8"></div>
<div style="left:-12.5px;top:949.0px;width:26px;height:14px;font:12px/14px 'Liberation Sans';text-align:center;color:#000;overflow:visible">37</div>
<div style="left:-12.5px;top:969.0px;width:26px;height:14px;font:12px/14px 'Liberation Sans';text-align:center;color:#000;overflow:visible">38</div>
<div style="left:13px;top:134px;width:1634px;height:1px;background:#c8c8cc"></div>
<div style="left:13px;top:154px;width:1634px;height:1px;background:#c8c8cc"></div>
<div style="left:13px;top:174px;width:1634px;height:1px;background:#c8c8cc"></div>
<div style="left:13px;top:194px;width:1634px;height:1px;background:#c8c8cc"></div>
<div style="left:13px;top:214px;width:1634px;height:1px;background:#c8c8cc"></div>
<div style="left:202px;top:115px;width:1px;height:120px;background:#c8c8cc"></div>
<div style="left:348px;top:115px;width:1px;height:120px;background:#c8c8cc"></div>
<div style="left:491px;top:115px;width:1px;height:120px;background:#c8c8cc"></div>
<div style="left:661px;top:115px;width:1px;height:120px;background:#c8c8cc"></div>
<div style="left:772px;top:115px;width:1px;height:120px;background:#c8c8cc"></div>
<div style="left:879px;top:115px;width:1px;height:120px;background:#c8c8cc"></div>
<div style="left:986px;top:115px;width:1px;height:120px;background:#c8c8cc"></div>
<div style="left:1093px;top:115px;width:1px;height:120px;background:#c8c8cc"></div>
<div style="left:1200px;top:115px;width:1px;height:120px;background:#c8c8cc"></div>
<div style="left:1337px;top:115px;width:1px;height:120px;background:#c8c8cc"></div>
<div style="left:1457px;top:115px;width:1px;height:120px;background:#c8c8cc"></div>
<div style="left:1561px;top:115px;width:1px;height:120px;background:#c8c8cc"></div>
<div style="left:13px;top:238.35px;width:189px;font:16px/20.9px 'Liberation Serif';text-align:center;white-space:nowrap;color:#000;">Заказчик</div>
<div style="left:203px;top:238.35px;width:145px;font:16px/20.9px 'Liberation Serif';text-align:center;white-space:nowrap;color:#000;">Реестровый номер<br>закупки (извещения)</div>
<div style="left:349px;top:238.35px;width:312px;font:16px/20.9px 'Liberation Serif';text-align:center;white-space:nowrap;color:#000;">Способ определения поставщика</div>
<div style="left:349px;top:278.85px;width:142px;font:16px/20.9px 'Liberation Serif';text-align:center;white-space:nowrap;color:#000;">Способ<br>определения<br>поставщика</div>
<div style="left:492px;top:278.85px;width:169px;font:16px/20.9px 'Liberation Serif';text-align:center;white-space:nowrap;color:#000;">Основание для закупки<br>у единственного<br>поставщика<br>(исполнителя,<br>подрядчика)</div>
<div style="left:662px;top:238.35px;width:110px;font:16px/20.9px 'Liberation Serif';text-align:center;white-space:nowrap;color:#000;">Реестровый<br>номер<br>контракта<br>(договора)</div>
<div style="left:773px;top:238.35px;width:106px;font:16px/20.9px 'Liberation Serif';text-align:center;white-space:nowrap;color:#000;">Номер<br>контракта<br>(договора)</div>
<div style="left:880px;top:238.35px;width:106px;font:16px/20.9px 'Liberation Serif';text-align:center;white-space:nowrap;color:#000;">Предмет<br>контракта /<br>Объект<br>закупки</div>
<div style="left:987px;top:238.35px;width:106px;font:16px/20.9px 'Liberation Serif';text-align:center;white-space:nowrap;color:#000;">ИНН<br>поставщика</div>
<div style="left:1090px;top:238.35px;width:114px;font:16px/20.9px 'Liberation Serif';text-align:center;white-space:nowrap;color:#000;">Наименование<br>поставщика</div>
<div style="left:1201px;top:238.35px;width:136px;font:16px/20.9px 'Liberation Serif';text-align:center;white-space:nowrap;color:#000;">Дата заключения<br>контракта<br>(договора)</div>
<div style="left:1338px;top:238.35px;width:119px;font:16px/20.9px 'Liberation Serif';text-align:center;white-space:nowrap;color:#000;">Начальная<br>(максимальная)<br>цена контракта,<br>руб.</div>
<div style="left:1458px;top:238.35px;width:103px;font:16px/20.9px 'Liberation Serif';text-align:center;white-space:nowrap;color:#000;">Цена<br>контракта<br>(договора),<br>руб.</div>
<div style="left:1562px;top:238.35px;width:85px;height:40px;overflow:hidden"><div style="left:2px;top:0;font:16px/20.9px 'Liberation Serif';white-space:nowrap">Экономия руб.</div></div>
<div style="left:13px;top:234px;width:1634px;height:3px;background:#000"></div>
<div style="left:13px;top:383px;width:1634px;height:3px;background:#000"></div>
<div style="left:347px;top:276px;width:315px;height:3px;background:#000"></div>
<div style="left:13px;top:234px;width:1px;height:152px;background:#000"></div>
<div style="left:201px;top:234px;width:3px;height:152px;background:#000"></div>
<div style="left:347px;top:234px;width:3px;height:152px;background:#000"></div>
<div style="left:490px;top:276px;width:3px;height:110px;background:#000"></div>
<div style="left:660px;top:234px;width:3px;height:152px;background:#000"></div>
<div style="left:771px;top:234px;width:3px;height:152px;background:#000"></div>
<div style="left:878px;top:234px;width:3px;height:152px;background:#000"></div>
<div style="left:985px;top:234px;width:3px;height:152px;background:#000"></div>
<div style="left:1092px;top:234px;width:3px;height:152px;background:#000"></div>
<div style="left:1199px;top:234px;width:3px;height:152px;background:#000"></div>
<div style="left:1336px;top:234px;width:3px;height:152px;background:#000"></div>
<div style="left:1456px;top:234px;width:3px;height:152px;background:#000"></div>
<div style="left:1560px;top:234px;width:3px;height:152px;background:#000"></div>
<div style="left:13px;top:388.27px;width:188px;height:16px;overflow:hidden;font:12.5px/16px 'Liberation Sans';letter-spacing:0.61px;word-spacing:-0.6px"><div style="left:2.5px;top:0;white-space:nowrap">Санкт-Петербургское государственное бюджетное учреждение</div></div>
<div style="left:203px;top:388.27px;width:144px;height:16px;overflow:hidden;font:12.5px/16px 'Liberation Sans';letter-spacing:0.05px;word-spacing:-0.6px"><div style="left:2px;top:0;white-space:nowrap">-</div></div>
<div style="left:349px;top:388.27px;width:141px;height:16px;overflow:hidden;font:12.5px/16px 'Liberation Sans';letter-spacing:0.70px;word-spacing:-0.6px"><div style="left:2px;top:0;white-space:nowrap">У единственного поставщика</div></div>
<div style="left:492px;top:388.27px;width:168px;height:16px;overflow:hidden;font:12.5px/16px 'Liberation Sans';letter-spacing:0.05px;word-spacing:-0.6px"><div style="left:2px;top:0;white-space:nowrap">-</div></div>
<div style="left:662px;top:388.27px;width:109px;height:16px;overflow:hidden;font:12.5px/16px 'Liberation Sans';letter-spacing:0.05px;word-spacing:-0.6px"><div style="left:2px;top:0;white-space:nowrap">0000004800813040001</div></div>
<div style="left:773px;top:388.27px;width:105px;height:16px;overflow:hidden;font:12.5px/16px 'Liberation Sans';letter-spacing:0.05px;word-spacing:-0.6px"><div style="left:2px;top:0;white-space:nowrap">01-1005</div></div>
<div style="left:880px;top:388.27px;width:105px;height:16px;overflow:hidden;font:12.5px/16px 'Liberation Sans';letter-spacing:0.59px;word-spacing:-0.6px"><div style="left:2px;top:0;white-space:nowrap">Оказание услуг связи</div></div>
<div style="left:987px;top:388.27px;width:105px;height:16px;overflow:hidden;font:12.5px/16px 'Liberation Sans';letter-spacing:0.05px;word-spacing:-0.6px"><div style="left:2px;top:0;white-space:nowrap">7825444176</div></div>
<div style="left:1094px;top:388.27px;width:105px;height:16px;overflow:hidden;font:12.5px/16px 'Liberation Sans';letter-spacing:0.52px;word-spacing:-0.6px"><div style="left:2px;top:0;white-space:nowrap">СПб ГУП &quot; АТС Смольнинская&quot;</div></div>
<div style="left:1201px;top:388.27px;width:135px;height:16px;overflow:hidden;font:12.5px/16px 'Liberation Sans';letter-spacing:0.05px;word-spacing:-0.6px"><div style="left:2px;top:0;white-space:nowrap">18.02.2013</div></div>
<div style="left:1338px;top:388.27px;width:118px;height:16px;overflow:hidden;font:12.5px/16px 'Liberation Sans';letter-spacing:0.05px;word-spacing:-0.6px"><div style="right:0.5px;top:0;white-space:nowrap">8 000,00</div></div>
<div style="left:1458px;top:388.27px;width:102px;height:16px;overflow:hidden;font:12.5px/16px 'Liberation Sans';letter-spacing:0.05px;word-spacing:-0.6px"><div style="right:0.5px;top:0;white-space:nowrap">8 206,90</div></div>
<div style="left:1562px;top:388.27px;width:85px;height:16px;overflow:hidden;font:12.5px/16px 'Liberation Sans';letter-spacing:0.05px;word-spacing:-0.6px"><div style="right:0px;top:0;white-space:nowrap">0</div></div>
<svg style="left:662px;top:386px" width="6" height="6"><path d="M0 0h6L0 6z" fill="#008000"/></svg>
<svg style="left:987px;top:386px" width="6" height="6"><path d="M0 0h6L0 6z" fill="#008000"/></svg>
<div style="left:13px;top:408.27px;width:188px;height:16px;overflow:hidden;font:12.5px/16px 'Liberation Sans';letter-spacing:0.61px;word-spacing:-0.6px"><div style="left:2.5px;top:0;white-space:nowrap">Санкт-Петербургское государственное бюджетное учреждение</div></div>
<div style="left:203px;top:408.27px;width:144px;height:16px;overflow:hidden;font:12.5px/16px 'Liberation Sans';letter-spacing:0.05px;word-spacing:-0.6px"><div style="left:2px;top:0;white-space:nowrap">-</div></div>
<div style="left:349px;top:408.27px;width:141px;height:16px;overflow:hidden;font:12.5px/16px 'Liberation Sans';letter-spacing:0.70px;word-spacing:-0.6px"><div style="left:2px;top:0;white-space:nowrap">У единственного поставщика</div></div>
<div style="left:492px;top:408.27px;width:168px;height:16px;overflow:hidden;font:12.5px/16px 'Liberation Sans';letter-spacing:0.05px;word-spacing:-0.6px"><div style="left:2px;top:0;white-space:nowrap">-</div></div>
<div style="left:662px;top:408.27px;width:109px;height:16px;overflow:hidden;font:12.5px/16px 'Liberation Sans';letter-spacing:0.05px;word-spacing:-0.6px"><div style="left:2px;top:0;white-space:nowrap">0000004800813047001</div></div>
<div style="left:773px;top:408.27px;width:105px;height:16px;overflow:hidden;font:12.5px/16px 'Liberation Sans';letter-spacing:0.05px;word-spacing:-0.6px"><div style="left:2px;top:0;white-space:nowrap">02-3283</div></div>
<div style="left:880px;top:408.27px;width:105px;height:16px;overflow:hidden;font:12.5px/16px 'Liberation Sans';letter-spacing:0.59px;word-spacing:-0.6px"><div style="left:2px;top:0;white-space:nowrap">Оказание услуг связи</div></div>
<div style="left:987px;top:408.27px;width:105px;height:16px;overflow:hidden;font:12.5px/16px 'Liberation Sans';letter-spacing:0.05px;word-spacing:-0.6px"><div style="left:2px;top:0;white-space:nowrap">7825444176</div></div>
<div style="left:1094px;top:408.27px;width:105px;height:16px;overflow:hidden;font:12.5px/16px 'Liberation Sans';letter-spacing:0.60px;word-spacing:-0.6px"><div style="left:2px;top:0;white-space:nowrap">Санкт-Петербургское ГУП</div></div>
<div style="left:1201px;top:408.27px;width:135px;height:16px;overflow:hidden;font:12.5px/16px 'Liberation Sans';letter-spacing:0.05px;word-spacing:-0.6px"><div style="left:2px;top:0;white-space:nowrap">26.02.2013</div></div>
<div style="left:1338px;top:408.27px;width:118px;height:16px;overflow:hidden;font:12.5px/16px 'Liberation Sans';letter-spacing:0.05px;word-spacing:-0.6px"><div style="right:0.5px;top:0;white-space:nowrap">87 544,20</div></div>
<div style="left:1458px;top:408.27px;width:102px;height:16px;overflow:hidden;font:12.5px/16px 'Liberation Sans';letter-spacing:0.05px;word-spacing:-0.6px"><div style="right:0.5px;top:0;white-space:nowrap">75 951,88</div></div>
<div style="left:1562px;top:408.27px;width:85px;height:16px;overflow:hidden;font:12.5px/16px 'Liberation Sans';letter-spacing:0.05px;word-spacing:-0.6px"><div style="right:0px;top:0;white-space:nowrap">0</div></div>
<svg style="left:662px;top:405px" width="6" height="6"><path d="M0 0h6L0 6z" fill="#008000"/></svg>
<svg style="left:987px;top:405px" width="6" height="6"><path d="M0 0h6L0 6z" fill="#008000"/></svg>
<div style="left:13px;top:428.27px;width:188px;height:16px;overflow:hidden;font:12.5px/16px 'Liberation Sans';letter-spacing:0.61px;word-spacing:-0.6px"><div style="left:2.5px;top:0;white-space:nowrap">Санкт-Петербургское государственное бюджетное учреждение</div></div>
<div style="left:203px;top:428.27px;width:144px;height:16px;overflow:hidden;font:12.5px/16px 'Liberation Sans';letter-spacing:0.05px;word-spacing:-0.6px"><div style="left:2px;top:0;white-space:nowrap">-</div></div>
<div style="left:349px;top:428.27px;width:141px;height:16px;overflow:hidden;font:12.5px/16px 'Liberation Sans';letter-spacing:0.70px;word-spacing:-0.6px"><div style="left:2px;top:0;white-space:nowrap">У единственного поставщика</div></div>
<div style="left:492px;top:428.27px;width:168px;height:16px;overflow:hidden;font:12.5px/16px 'Liberation Sans';letter-spacing:0.05px;word-spacing:-0.6px"><div style="left:2px;top:0;white-space:nowrap">-</div></div>
<div style="left:662px;top:428.27px;width:109px;height:16px;overflow:hidden;font:12.5px/16px 'Liberation Sans';letter-spacing:0.05px;word-spacing:-0.6px"><div style="left:2px;top:0;white-space:nowrap">0000004800813051001</div></div>
<div style="left:773px;top:428.27px;width:105px;height:16px;overflow:hidden;font:12.5px/16px 'Liberation Sans';letter-spacing:0.05px;word-spacing:-0.6px"><div style="left:2px;top:0;white-space:nowrap">51060/13</div></div>
<div style="left:880px;top:428.27px;width:105px;height:16px;overflow:hidden;font:12.5px/16px 'Liberation Sans';letter-spacing:0.59px;word-spacing:-0.6px"><div style="left:2px;top:0;white-space:nowrap">Вывоз твердых бытовых отходов</div></div>
<div style="left:987px;top:428.27px;width:105px;height:16px;overflow:hidden;font:12.5px/16px 'Liberation Sans';letter-spacing:0.05px;word-spacing:-0.6px"><div style="left:2px;top:0;white-space:nowrap">7830002705</div></div>
<div style="left:1094px;top:428.27px;width:105px;height:16px;overflow:hidden;font:12.5px/16px 'Liberation Sans';letter-spacing:0.44px;word-spacing:-0.6px"><div style="left:2px;top:0;white-space:nowrap">&quot;Автопарк № 1 &quot; Спецтранс&quot;</div></div>
<div style="left:1201px;top:428.27px;width:135px;height:16px;overflow:hidden;font:12.5px/16px 'Liberation Sans';letter-spacing:0.05px;word-spacing:-0.6px"><div style="left:2px;top:0;white-space:nowrap">15.03.2013</div></div>
<div style="left:1338px;top:428.27px;width:118px;height:16px;overflow:hidden;font:12.5px/16px 'Liberation Sans';letter-spacing:0.05px;word-spacing:-0.6px"><div style="right:0.5px;top:0;white-space:nowrap">23 615,00</div></div>
<div style="left:1458px;top:428.27px;width:102px;height:16px;overflow:hidden;font:12.5px/16px 'Liberation Sans';letter-spacing:0.05px;word-spacing:-0.6px"><div style="right:0.5px;top:0;white-space:nowrap">23 615,94</div></div>
<div style="left:1562px;top:428.27px;width:85px;height:16px;overflow:hidden;font:12.5px/16px 'Liberation Sans';letter-spacing:0.05px;word-spacing:-0.6px"><div style="right:0px;top:0;white-space:nowrap">0</div></div>
<svg style="left:662px;top:425px" width="6" height="6"><path d="M0 0h6L0 6z" fill="#008000"/></svg>
<svg style="left:987px;top:425px" width="6" height="6"><path d="M0 0h6L0 6z" fill="#008000"/></svg>
<div style="left:13px;top:448.27px;width:188px;height:16px;overflow:hidden;font:12.5px/16px 'Liberation Sans';letter-spacing:0.61px;word-spacing:-0.6px"><div style="left:2.5px;top:0;white-space:nowrap">Санкт-Петербургское государственное бюджетное учреждение</div></div>
<div style="left:203px;top:448.27px;width:144px;height:16px;overflow:hidden;font:12.5px/16px 'Liberation Sans';letter-spacing:0.05px;word-spacing:-0.6px"><div style="left:2px;top:0;white-space:nowrap">-</div></div>
<div style="left:349px;top:448.27px;width:141px;height:16px;overflow:hidden;font:12.5px/16px 'Liberation Sans';letter-spacing:0.70px;word-spacing:-0.6px"><div style="left:2px;top:0;white-space:nowrap">У единственного поставщика</div></div>
<div style="left:492px;top:448.27px;width:168px;height:16px;overflow:hidden;font:12.5px/16px 'Liberation Sans';letter-spacing:0.05px;word-spacing:-0.6px"><div style="left:2px;top:0;white-space:nowrap">-</div></div>
<div style="left:662px;top:448.27px;width:109px;height:16px;overflow:hidden;font:12.5px/16px 'Liberation Sans';letter-spacing:0.05px;word-spacing:-0.6px"><div style="left:2px;top:0;white-space:nowrap">0000004800813060001</div></div>
<div style="left:773px;top:448.27px;width:105px;height:16px;overflow:hidden;font:12.5px/16px 'Liberation Sans';letter-spacing:0.05px;word-spacing:-0.6px"><div style="left:2px;top:0;white-space:nowrap">51060/13</div></div>
<div style="left:880px;top:448.27px;width:105px;height:16px;overflow:hidden;font:12.5px/16px 'Liberation Sans';letter-spacing:0.59px;word-spacing:-0.6px"><div style="left:2px;top:0;white-space:nowrap">Вывоз твердых бытовых отходов</div></div>
<div style="left:987px;top:448.27px;width:105px;height:16px;overflow:hidden;font:12.5px/16px 'Liberation Sans';letter-spacing:0.05px;word-spacing:-0.6px"><div style="left:2px;top:0;white-space:nowrap">7830002705</div></div>
<div style="left:1094px;top:448.27px;width:105px;height:16px;overflow:hidden;font:12.5px/16px 'Liberation Sans';letter-spacing:0.44px;word-spacing:-0.6px"><div style="left:2px;top:0;white-space:nowrap">&quot;Автопарк № 1 &quot; Спецтранс&quot;</div></div>
<div style="left:1201px;top:448.27px;width:135px;height:16px;overflow:hidden;font:12.5px/16px 'Liberation Sans';letter-spacing:0.05px;word-spacing:-0.6px"><div style="left:2px;top:0;white-space:nowrap">01.04.2013</div></div>
<div style="left:1338px;top:448.27px;width:118px;height:16px;overflow:hidden;font:12.5px/16px 'Liberation Sans';letter-spacing:0.05px;word-spacing:-0.6px"><div style="right:0.5px;top:0;white-space:nowrap">11 807,97</div></div>
<div style="left:1458px;top:448.27px;width:102px;height:16px;overflow:hidden;font:12.5px/16px 'Liberation Sans';letter-spacing:0.05px;word-spacing:-0.6px"><div style="right:0.5px;top:0;white-space:nowrap">11 807,97</div></div>
<div style="left:1562px;top:448.27px;width:85px;height:16px;overflow:hidden;font:12.5px/16px 'Liberation Sans';letter-spacing:0.05px;word-spacing:-0.6px"><div style="right:0px;top:0;white-space:nowrap">0</div></div>
<svg style="left:662px;top:445px" width="6" height="6"><path d="M0 0h6L0 6z" fill="#008000"/></svg>
<svg style="left:987px;top:445px" width="6" height="6"><path d="M0 0h6L0 6z" fill="#008000"/></svg>
<div style="left:13px;top:468.27px;width:188px;height:16px;overflow:hidden;font:12.5px/16px 'Liberation Sans';letter-spacing:0.61px;word-spacing:-0.6px"><div style="left:2.5px;top:0;white-space:nowrap">Санкт-Петербургское государственное бюджетное учреждение</div></div>
<div style="left:203px;top:468.27px;width:144px;height:16px;overflow:hidden;font:12.5px/16px 'Liberation Sans';letter-spacing:0.05px;word-spacing:-0.6px"><div style="left:2px;top:0;white-space:nowrap">-</div></div>
<div style="left:349px;top:468.27px;width:141px;height:16px;overflow:hidden;font:12.5px/16px 'Liberation Sans';letter-spacing:0.70px;word-spacing:-0.6px"><div style="left:2px;top:0;white-space:nowrap">У единственного поставщика</div></div>
<div style="left:492px;top:468.27px;width:168px;height:16px;overflow:hidden;font:12.5px/16px 'Liberation Sans';letter-spacing:0.05px;word-spacing:-0.6px"><div style="left:2px;top:0;white-space:nowrap">-</div></div>
<div style="left:662px;top:468.27px;width:109px;height:16px;overflow:hidden;font:12.5px/16px 'Liberation Sans';letter-spacing:0.05px;word-spacing:-0.6px"><div style="left:2px;top:0;white-space:nowrap">0000004800813064001</div></div>
<div style="left:773px;top:468.27px;width:105px;height:16px;overflow:hidden;font:12.5px/16px 'Liberation Sans';letter-spacing:0.21px;word-spacing:-0.6px"><div style="left:2px;top:0;white-space:nowrap">01-1005 ртк</div></div>
<div style="left:880px;top:468.27px;width:105px;height:16px;overflow:hidden;font:12.5px/16px 'Liberation Sans';letter-spacing:0.59px;word-spacing:-0.6px"><div style="left:2px;top:0;white-space:nowrap">оказание услуг местной связи</div></div>
<div style="left:987px;top:468.27px;width:105px;height:16px;overflow:hidden;font:12.5px/16px 'Liberation Sans';letter-spacing:0.05px;word-spacing:-0.6px"><div style="left:2px;top:0;white-space:nowrap">7825444176</div></div>
<div style="left:1094px;top:468.27px;width:105px;height:16px;overflow:hidden;font:12.5px/16px 'Liberation Sans';letter-spacing:0.53px;word-spacing:-0.6px"><div style="left:2px;top:0;white-space:nowrap">СПб ГУП &quot;АТС Смольнинская&quot;</div></div>
<div style="left:1201px;top:468.27px;width:135px;height:16px;overflow:hidden;font:12.5px/16px 'Liberation Sans';letter-spacing:0.05px;word-spacing:-0.6px"><div style="left:2px;top:0;white-space:nowrap">03.04.2013</div></div>
<div style="left:1338px;top:468.27px;width:118px;height:16px;overflow:hidden;font:12.5px/16px 'Liberation Sans';letter-spacing:0.05px;word-spacing:-0.6px"><div style="right:0.5px;top:0;white-space:nowrap">4 455,80</div></div>
<div style="left:1458px;top:468.27px;width:102px;height:16px;overflow:hidden;font:12.5px/16px 'Liberation Sans';letter-spacing:0.05px;word-spacing:-0.6px"><div style="right:0.5px;top:0;white-space:nowrap">251,57</div></div>
<div style="left:1562px;top:468.27px;width:85px;height:16px;overflow:hidden;font:12.5px/16px 'Liberation Sans';letter-spacing:0.05px;word-spacing:-0.6px"><div style="right:0px;top:0;white-space:nowrap">0</div></div>
<svg style="left:662px;top:465px" width="6" height="6"><path d="M0 0h6L0 6z" fill="#008000"/></svg>
<svg style="left:987px;top:465px" width="6" height="6"><path d="M0 0h6L0 6z" fill="#008000"/></svg>
<div style="left:13px;top:488.27px;width:188px;height:16px;overflow:hidden;font:12.5px/16px 'Liberation Sans';letter-spacing:0.61px;word-spacing:-0.6px"><div style="left:2.5px;top:0;white-space:nowrap">Санкт-Петербургское государственное бюджетное учреждение</div></div>
<div style="left:203px;top:488.27px;width:144px;height:16px;overflow:hidden;font:12.5px/16px 'Liberation Sans';letter-spacing:0.05px;word-spacing:-0.6px"><div style="left:2px;top:0;white-space:nowrap">-</div></div>
<div style="left:349px;top:488.27px;width:141px;height:16px;overflow:hidden;font:12.5px/16px 'Liberation Sans';letter-spacing:0.70px;word-spacing:-0.6px"><div style="left:2px;top:0;white-space:nowrap">У единственного поставщика</div></div>
<div style="left:492px;top:488.27px;width:168px;height:16px;overflow:hidden;font:12.5px/16px 'Liberation Sans';letter-spacing:0.05px;word-spacing:-0.6px"><div style="left:2px;top:0;white-space:nowrap">-</div></div>
<div style="left:662px;top:488.27px;width:109px;height:16px;overflow:hidden;font:12.5px/16px 'Liberation Sans';letter-spacing:0.05px;word-spacing:-0.6px"><div style="left:2px;top:0;white-space:nowrap">0000004800813089001</div></div>
<div style="left:773px;top:488.27px;width:105px;height:16px;overflow:hidden;font:12.5px/16px 'Liberation Sans';letter-spacing:0.05px;word-spacing:-0.6px"><div style="left:2px;top:0;white-space:nowrap">04-0058/10849</div></div>
<div style="left:880px;top:488.27px;width:105px;height:16px;overflow:hidden;font:12.5px/16px 'Liberation Sans';letter-spacing:0.61px;word-spacing:-0.6px"><div style="left:2px;top:0;white-space:nowrap">Выполнение работ</div></div>
<div style="left:987px;top:488.27px;width:105px;height:16px;overflow:hidden;font:12.5px/16px 'Liberation Sans';letter-spacing:0.05px;word-spacing:-0.6px"><div style="left:2px;top:0;white-space:nowrap">7825444176</div></div>
<div style="left:1094px;top:488.27px;width:105px;height:16px;overflow:hidden;font:12.5px/16px 'Liberation Sans';letter-spacing:0.60px;word-spacing:-0.6px"><div style="left:2px;top:0;white-space:nowrap">Санкт-Петербургское ГУП</div></div>
<div style="left:1201px;top:488.27px;width:135px;height:16px;overflow:hidden;font:12.5px/16px 'Liberation Sans';letter-spacing:0.05px;word-spacing:-0.6px"><div style="left:2px;top:0;white-space:nowrap">30.04.2013</div></div>
<div style="left:1338px;top:488.27px;width:118px;height:16px;overflow:hidden;font:12.5px/16px 'Liberation Sans';letter-spacing:0.05px;word-spacing:-0.6px"><div style="right:0.5px;top:0;white-space:nowrap">5 234,13</div></div>
<div style="left:1458px;top:488.27px;width:102px;height:16px;overflow:hidden;font:12.5px/16px 'Liberation Sans';letter-spacing:0.05px;word-spacing:-0.6px"><div style="right:0.5px;top:0;white-space:nowrap">5 234,13</div></div>
<div style="left:1562px;top:488.27px;width:85px;height:16px;overflow:hidden;font:12.5px/16px 'Liberation Sans';letter-spacing:0.05px;word-spacing:-0.6px"><div style="right:0px;top:0;white-space:nowrap">0</div></div>
<svg style="left:662px;top:485px" width="6" height="6"><path d="M0 0h6L0 6z" fill="#008000"/></svg>
<svg style="left:987px;top:485px" width="6" height="6"><path d="M0 0h6L0 6z" fill="#008000"/></svg>
<div style="left:13px;top:508.27px;width:188px;height:16px;overflow:hidden;font:12.5px/16px 'Liberation Sans';letter-spacing:0.61px;word-spacing:-0.6px"><div style="left:2.5px;top:0;white-space:nowrap">Санкт-Петербургское государственное бюджетное учреждение</div></div>
<div style="left:203px;top:508.27px;width:144px;height:16px;overflow:hidden;font:12.5px/16px 'Liberation Sans';letter-spacing:0.05px;word-spacing:-0.6px"><div style="left:2px;top:0;white-space:nowrap">-</div></div>
<div style="left:349px;top:508.27px;width:141px;height:16px;overflow:hidden;font:12.5px/16px 'Liberation Sans';letter-spacing:0.70px;word-spacing:-0.6px"><div style="left:2px;top:0;white-space:nowrap">У единственного поставщика</div></div>
<div style="left:492px;top:508.27px;width:168px;height:16px;overflow:hidden;font:12.5px/16px 'Liberation Sans';letter-spacing:0.05px;word-spacing:-0.6px"><div style="left:2px;top:0;white-space:nowrap">-</div></div>
<div style="left:662px;top:508.27px;width:109px;height:16px;overflow:hidden;font:12.5px/16px 'Liberation Sans';letter-spacing:0.05px;word-spacing:-0.6px"><div style="left:2px;top:0;white-space:nowrap">0000004800813097001</div></div>
<div style="left:773px;top:508.27px;width:105px;height:16px;overflow:hidden;font:12.5px/16px 'Liberation Sans';letter-spacing:0.41px;word-spacing:-0.6px"><div style="left:2px;top:0;white-space:nowrap">3 ГПД</div></div>
<div style="left:880px;top:508.27px;width:105px;height:16px;overflow:hidden;font:12.5px/16px 'Liberation Sans';letter-spacing:0.62px;word-spacing:-0.6px"><div style="left:2px;top:0;white-space:nowrap">Поставка велопарковок</div></div>
<div style="left:987px;top:508.27px;width:105px;height:16px;overflow:hidden;font:12.5px/16px 'Liberation Sans';letter-spacing:0.05px;word-spacing:-0.6px"><div style="left:2px;top:0;white-space:nowrap">7814506624</div></div>
<div style="left:1094px;top:508.27px;width:105px;height:16px;overflow:hidden;font:12.5px/16px 'Liberation Sans';letter-spacing:0.60px;word-spacing:-0.6px"><div style="left:2px;top:0;white-space:nowrap">Общество с ограниченной</div></div>
<div style="left:1201px;top:508.27px;width:135px;height:16px;overflow:hidden;font:12.5px/16px 'Liberation Sans';letter-spacing:0.05px;word-spacing:-0.6px"><div style="left:2px;top:0;white-space:nowrap">22.05.2013</div></div>
<div style="left:1338px;top:508.27px;width:118px;height:16px;overflow:hidden;font:12.5px/16px 'Liberation Sans';letter-spacing:0.05px;word-spacing:-0.6px"><div style="right:0.5px;top:0;white-space:nowrap">18 000,00</div></div>
<div style="left:1458px;top:508.27px;width:102px;height:16px;overflow:hidden;font:12.5px/16px 'Liberation Sans';letter-spacing:0.05px;word-spacing:-0.6px"><div style="right:0.5px;top:0;white-space:nowrap">18 000,00</div></div>
<div style="left:1562px;top:508.27px;width:85px;height:16px;overflow:hidden;font:12.5px/16px 'Liberation Sans';letter-spacing:0.05px;word-spacing:-0.6px"><div style="right:0px;top:0;white-space:nowrap">0</div></div>
<svg style="left:662px;top:505px" width="6" height="6"><path d="M0 0h6L0 6z" fill="#008000"/></svg>
<svg style="left:987px;top:505px" width="6" height="6"><path d="M0 0h6L0 6z" fill="#008000"/></svg>
<div style="left:13px;top:528.27px;width:188px;height:16px;overflow:hidden;font:12.5px/16px 'Liberation Sans';letter-spacing:0.61px;word-spacing:-0.6px"><div style="left:2.5px;top:0;white-space:nowrap">Санкт-Петербургское государственное бюджетное учреждение</div></div>
<div style="left:203px;top:528.27px;width:144px;height:16px;overflow:hidden;font:12.5px/16px 'Liberation Sans';letter-spacing:0.05px;word-spacing:-0.6px"><div style="left:2px;top:0;white-space:nowrap">-</div></div>
<div style="left:349px;top:528.27px;width:141px;height:16px;overflow:hidden;font:12.5px/16px 'Liberation Sans';letter-spacing:0.70px;word-spacing:-0.6px"><div style="left:2px;top:0;white-space:nowrap">У единственного поставщика</div></div>
<div style="left:492px;top:528.27px;width:168px;height:16px;overflow:hidden;font:12.5px/16px 'Liberation Sans';letter-spacing:0.05px;word-spacing:-0.6px"><div style="left:2px;top:0;white-space:nowrap">-</div></div>
<div style="left:662px;top:528.27px;width:109px;height:16px;overflow:hidden;font:12.5px/16px 'Liberation Sans';letter-spacing:0.05px;word-spacing:-0.6px"><div style="left:2px;top:0;white-space:nowrap">0000004800813114001</div></div>
<div style="left:773px;top:528.27px;width:105px;height:16px;overflow:hidden;font:12.5px/16px 'Liberation Sans';letter-spacing:0.05px;word-spacing:-0.6px"><div style="left:2px;top:0;white-space:nowrap">02-3467</div></div>
<div style="left:880px;top:528.27px;width:105px;height:16px;overflow:hidden;font:12.5px/16px 'Liberation Sans';letter-spacing:0.59px;word-spacing:-0.6px"><div style="left:2px;top:0;white-space:nowrap">Оказание услуг связи</div></div>
<div style="left:987px;top:528.27px;width:105px;height:16px;overflow:hidden;font:12.5px/16px 'Liberation Sans';letter-spacing:0.05px;word-spacing:-0.6px"><div style="left:2px;top:0;white-space:nowrap">7825444176</div></div>
<div style="left:1094px;top:528.27px;width:105px;height:16px;overflow:hidden;font:12.5px/16px 'Liberation Sans';letter-spacing:0.60px;word-spacing:-0.6px"><div style="left:2px;top:0;white-space:nowrap">Санкт-Петербургское ГУП</div></div>
<div style="left:1201px;top:528.27px;width:135px;height:16px;overflow:hidden;font:12.5px/16px 'Liberation Sans';letter-spacing:0.05px;word-spacing:-0.6px"><div style="left:2px;top:0;white-space:nowrap">26.06.2013</div></div>
<div style="left:1338px;top:528.27px;width:118px;height:16px;overflow:hidden;font:12.5px/16px 'Liberation Sans';letter-spacing:0.05px;word-spacing:-0.6px"><div style="right:0.5px;top:0;white-space:nowrap">14 620,20</div></div>
<div style="left:1458px;top:528.27px;width:102px;height:16px;overflow:hidden;font:12.5px/16px 'Liberation Sans';letter-spacing:0.05px;word-spacing:-0.6px"><div style="right:0.5px;top:0;white-space:nowrap">14 620,20</div></div>
<div style="left:1562px;top:528.27px;width:85px;height:16px;overflow:hidden;font:12.5px/16px 'Liberation Sans';letter-spacing:0.05px;word-spacing:-0.6px"><div style="right:0px;top:0;white-space:nowrap">0</div></div>
<svg style="left:662px;top:525px" width="6" height="6"><path d="M0 0h6L0 6z" fill="#008000"/></svg>
<svg style="left:987px;top:525px" width="6" height="6"><path d="M0 0h6L0 6z" fill="#008000"/></svg>
<div style="left:13px;top:548.27px;width:188px;height:16px;overflow:hidden;font:12.5px/16px 'Liberation Sans';letter-spacing:0.61px;word-spacing:-0.6px"><div style="left:2.5px;top:0;white-space:nowrap">Санкт-Петербургское государственное бюджетное учреждение</div></div>
<div style="left:203px;top:548.27px;width:144px;height:16px;overflow:hidden;font:12.5px/16px 'Liberation Sans';letter-spacing:0.05px;word-spacing:-0.6px"><div style="left:2px;top:0;white-space:nowrap">-</div></div>
<div style="left:349px;top:548.27px;width:141px;height:16px;overflow:hidden;font:12.5px/16px 'Liberation Sans';letter-spacing:0.70px;word-spacing:-0.6px"><div style="left:2px;top:0;white-space:nowrap">У единственного поставщика</div></div>
<div style="left:492px;top:548.27px;width:168px;height:16px;overflow:hidden;font:12.5px/16px 'Liberation Sans';letter-spacing:0.05px;word-spacing:-0.6px"><div style="left:2px;top:0;white-space:nowrap">-</div></div>
<div style="left:662px;top:548.27px;width:109px;height:16px;overflow:hidden;font:12.5px/16px 'Liberation Sans';letter-spacing:0.05px;word-spacing:-0.6px"><div style="left:2px;top:0;white-space:nowrap">0000004800813115001</div></div>
<div style="left:773px;top:548.27px;width:105px;height:16px;overflow:hidden;font:12.5px/16px 'Liberation Sans';letter-spacing:0.05px;word-spacing:-0.6px"><div style="left:2px;top:0;white-space:nowrap">04-0327</div></div>
<div style="left:880px;top:548.27px;width:105px;height:16px;overflow:hidden;font:12.5px/16px 'Liberation Sans';letter-spacing:0.62px;word-spacing:-0.6px"><div style="left:2px;top:0;white-space:nowrap">Выполнение договора</div></div>
<div style="left:987px;top:548.27px;width:105px;height:16px;overflow:hidden;font:12.5px/16px 'Liberation Sans';letter-spacing:0.05px;word-spacing:-0.6px"><div style="left:2px;top:0;white-space:nowrap">7825444176</div></div>
<div style="left:1094px;top:548.27px;width:105px;height:16px;overflow:hidden;font:12.5px/16px 'Liberation Sans';letter-spacing:0.53px;word-spacing:-0.6px"><div style="left:2px;top:0;white-space:nowrap">СПБ ГУП &quot;АТС Смольнинская&quot;</div></div>
<div style="left:1201px;top:548.27px;width:135px;height:16px;overflow:hidden;font:12.5px/16px 'Liberation Sans';letter-spacing:0.05px;word-spacing:-0.6px"><div style="left:2px;top:0;white-space:nowrap">28.06.2013</div></div>
<div style="left:1338px;top:548.27px;width:118px;height:16px;overflow:hidden;font:12.5px/16px 'Liberation Sans';letter-spacing:0.05px;word-spacing:-0.6px"><div style="right:0.5px;top:0;white-space:nowrap">20 000,00</div></div>
<div style="left:1458px;top:548.27px;width:102px;height:16px;overflow:hidden;font:12.5px/16px 'Liberation Sans';letter-spacing:0.05px;word-spacing:-0.6px"><div style="right:0.5px;top:0;white-space:nowrap">731,60</div></div>
<div style="left:1562px;top:548.27px;width:85px;height:16px;overflow:hidden;font:12.5px/16px 'Liberation Sans';letter-spacing:0.05px;word-spacing:-0.6px"><div style="right:0px;top:0;white-space:nowrap">0</div></div>
<svg style="left:662px;top:545px" width="6" height="6"><path d="M0 0h6L0 6z" fill="#008000"/></svg>
<svg style="left:987px;top:545px" width="6" height="6"><path d="M0 0h6L0 6z" fill="#008000"/></svg>
<div style="left:13px;top:568.27px;width:188px;height:16px;overflow:hidden;font:12.5px/16px 'Liberation Sans';letter-spacing:0.61px;word-spacing:-0.6px"><div style="left:2.5px;top:0;white-space:nowrap">Санкт-Петербургское государственное бюджетное учреждение</div></div>
<div style="left:203px;top:568.27px;width:144px;height:16px;overflow:hidden;font:12.5px/16px 'Liberation Sans';letter-spacing:0.05px;word-spacing:-0.6px"><div style="left:2px;top:0;white-space:nowrap">-</div></div>
<div style="left:349px;top:568.27px;width:141px;height:16px;overflow:hidden;font:12.5px/16px 'Liberation Sans';letter-spacing:0.70px;word-spacing:-0.6px"><div style="left:2px;top:0;white-space:nowrap">У единственного поставщика</div></div>
<div style="left:492px;top:568.27px;width:168px;height:16px;overflow:hidden;font:12.5px/16px 'Liberation Sans';letter-spacing:0.05px;word-spacing:-0.6px"><div style="left:2px;top:0;white-space:nowrap">-</div></div>
<div style="left:662px;top:568.27px;width:109px;height:16px;overflow:hidden;font:12.5px/16px 'Liberation Sans';letter-spacing:0.05px;word-spacing:-0.6px"><div style="left:2px;top:0;white-space:nowrap">0000004800813123001</div></div>
<div style="left:773px;top:568.27px;width:105px;height:16px;overflow:hidden;font:12.5px/16px 'Liberation Sans';letter-spacing:0.05px;word-spacing:-0.6px"><div style="left:2px;top:0;white-space:nowrap">02-3472</div></div>
<div style="left:880px;top:568.27px;width:105px;height:16px;overflow:hidden;font:12.5px/16px 'Liberation Sans';letter-spacing:0.59px;word-spacing:-0.6px"><div style="left:2px;top:0;white-space:nowrap">Оказание услуг связи</div></div>
<div style="left:987px;top:568.27px;width:105px;height:16px;overflow:hidden;font:12.5px/16px 'Liberation Sans';letter-spacing:0.05px;word-spacing:-0.6px"><div style="left:2px;top:0;white-space:nowrap">7825444176</div></div>
<div style="left:1094px;top:568.27px;width:105px;height:16px;overflow:hidden;font:12.5px/16px 'Liberation Sans';letter-spacing:0.53px;word-spacing:-0.6px"><div style="left:2px;top:0;white-space:nowrap">СПБ ГУП &quot;АТС Смольнинская&quot;</div></div>
<div style="left:1201px;top:568.27px;width:135px;height:16px;overflow:hidden;font:12.5px/16px 'Liberation Sans';letter-spacing:0.05px;word-spacing:-0.6px"><div style="left:2px;top:0;white-space:nowrap">01.07.2013</div></div>
<div style="left:1338px;top:568.27px;width:118px;height:16px;overflow:hidden;font:12.5px/16px 'Liberation Sans';letter-spacing:0.05px;word-spacing:-0.6px"><div style="right:0.5px;top:0;white-space:nowrap">100 000,00</div></div>
<div style="left:1458px;top:568.27px;width:102px;height:16px;overflow:hidden;font:12.5px/16px 'Liberation Sans';letter-spacing:0.05px;word-spacing:-0.6px"><div style="right:0.5px;top:0;white-space:nowrap">87 735,36</div></div>
<div style="left:1562px;top:568.27px;width:85px;height:16px;overflow:hidden;font:12.5px/16px 'Liberation Sans';letter-spacing:0.05px;word-spacing:-0.6px"><div style="right:0px;top:0;white-space:nowrap">0</div></div>
<svg style="left:662px;top:565px" width="6" height="6"><path d="M0 0h6L0 6z" fill="#008000"/></svg>
<svg style="left:987px;top:565px" width="6" height="6"><path d="M0 0h6L0 6z" fill="#008000"/></svg>
<div style="left:13px;top:588.27px;width:188px;height:16px;overflow:hidden;font:12.5px/16px 'Liberation Sans';letter-spacing:0.61px;word-spacing:-0.6px"><div style="left:2.5px;top:0;white-space:nowrap">Санкт-Петербургское государственное бюджетное учреждение</div></div>
<div style="left:203px;top:588.27px;width:144px;height:16px;overflow:hidden;font:12.5px/16px 'Liberation Sans';letter-spacing:0.05px;word-spacing:-0.6px"><div style="left:2px;top:0;white-space:nowrap">-</div></div>
<div style="left:349px;top:588.27px;width:141px;height:16px;overflow:hidden;font:12.5px/16px 'Liberation Sans';letter-spacing:0.70px;word-spacing:-0.6px"><div style="left:2px;top:0;white-space:nowrap">У единственного поставщика</div></div>
<div style="left:492px;top:588.27px;width:168px;height:16px;overflow:hidden;font:12.5px/16px 'Liberation Sans';letter-spacing:0.05px;word-spacing:-0.6px"><div style="left:2px;top:0;white-space:nowrap">-</div></div>
<div style="left:662px;top:588.27px;width:109px;height:16px;overflow:hidden;font:12.5px/16px 'Liberation Sans';letter-spacing:0.05px;word-spacing:-0.6px"><div style="left:2px;top:0;white-space:nowrap">0000004800813142001</div></div>
<div style="left:773px;top:588.27px;width:105px;height:16px;overflow:hidden;font:12.5px/16px 'Liberation Sans';letter-spacing:0.18px;word-spacing:-0.6px"><div style="left:2px;top:0;white-space:nowrap">05/08/2013-ГПД</div></div>
<div style="left:880px;top:588.27px;width:105px;height:16px;overflow:hidden;font:12.5px/16px 'Liberation Sans';letter-spacing:0.58px;word-spacing:-0.6px"><div style="left:2px;top:0;white-space:nowrap">Оказание услуг по</div></div>
<div style="left:987px;top:588.27px;width:105px;height:16px;overflow:hidden;font:12.5px/16px 'Liberation Sans';letter-spacing:0.05px;word-spacing:-0.6px"><div style="left:2px;top:0;white-space:nowrap">7826135491</div></div>
<div style="left:1094px;top:588.27px;width:105px;height:16px;overflow:hidden;font:12.5px/16px 'Liberation Sans';letter-spacing:0.63px;word-spacing:-0.6px"><div style="left:2px;top:0;white-space:nowrap">Архитектурно-Реставрационная</div></div>
<div style="left:1201px;top:588.27px;width:135px;height:16px;overflow:hidden;font:12.5px/16px 'Liberation Sans';letter-spacing:0.05px;word-spacing:-0.6px"><div style="left:2px;top:0;white-space:nowrap">16.08.2013</div></div>
<div style="left:1338px;top:588.27px;width:118px;height:16px;overflow:hidden;font:12.5px/16px 'Liberation Sans';letter-spacing:0.05px;word-spacing:-0.6px"><div style="right:0.5px;top:0;white-space:nowrap">99 900,00</div></div>
<div style="left:1458px;top:588.27px;width:102px;height:16px;overflow:hidden;font:12.5px/16px 'Liberation Sans';letter-spacing:0.05px;word-spacing:-0.6px"><div style="right:0.5px;top:0;white-space:nowrap">99 554,00</div></div>
<div style="left:1562px;top:588.27px;width:85px;height:16px;overflow:hidden;font:12.5px/16px 'Liberation Sans';letter-spacing:0.05px;word-spacing:-0.6px"><div style="right:0px;top:0;white-space:nowrap">0</div></div>
<svg style="left:662px;top:585px" width="6" height="6"><path d="M0 0h6L0 6z" fill="#008000"/></svg>
<svg style="left:987px;top:585px" width="6" height="6"><path d="M0 0h6L0 6z" fill="#008000"/></svg>
<div style="left:13px;top:608.27px;width:188px;height:16px;overflow:hidden;font:12.5px/16px 'Liberation Sans';letter-spacing:0.61px;word-spacing:-0.6px"><div style="left:2.5px;top:0;white-space:nowrap">Санкт-Петербургское государственное бюджетное учреждение</div></div>
<div style="left:203px;top:608.27px;width:144px;height:16px;overflow:hidden;font:12.5px/16px 'Liberation Sans';letter-spacing:0.05px;word-spacing:-0.6px"><div style="left:2px;top:0;white-space:nowrap">-</div></div>
<div style="left:349px;top:608.27px;width:141px;height:16px;overflow:hidden;font:12.5px/16px 'Liberation Sans';letter-spacing:0.70px;word-spacing:-0.6px"><div style="left:2px;top:0;white-space:nowrap">У единственного поставщика</div></div>
<div style="left:492px;top:608.27px;width:168px;height:16px;overflow:hidden;font:12.5px/16px 'Liberation Sans';letter-spacing:0.05px;word-spacing:-0.6px"><div style="left:2px;top:0;white-space:nowrap">-</div></div>
<div style="left:662px;top:608.27px;width:109px;height:16px;overflow:hidden;font:12.5px/16px 'Liberation Sans';letter-spacing:0.05px;word-spacing:-0.6px"><div style="left:2px;top:0;white-space:nowrap">0000004800813150001</div></div>
<div style="left:773px;top:608.27px;width:105px;height:16px;overflow:hidden;font:12.5px/16px 'Liberation Sans';letter-spacing:0.18px;word-spacing:-0.6px"><div style="left:2px;top:0;white-space:nowrap">06/09/2013-ГПД</div></div>
<div style="left:880px;top:608.27px;width:105px;height:16px;overflow:hidden;font:12.5px/16px 'Liberation Sans';letter-spacing:0.60px;word-spacing:-0.6px"><div style="left:2px;top:0;white-space:nowrap">Поставка офисной бумаги</div></div>
<div style="left:987px;top:608.27px;width:105px;height:16px;overflow:hidden;font:12.5px/16px 'Liberation Sans';letter-spacing:0.05px;word-spacing:-0.6px"><div style="left:2px;top:0;white-space:nowrap">7839005130</div></div>
<div style="left:1094px;top:608.27px;width:105px;height:16px;overflow:hidden;font:12.5px/16px 'Liberation Sans';letter-spacing:0.54px;word-spacing:-0.6px"><div style="left:2px;top:0;white-space:nowrap">&quot;Комус-Петербург&quot;</div></div>
<div style="left:1201px;top:608.27px;width:135px;height:16px;overflow:hidden;font:12.5px/16px 'Liberation Sans';letter-spacing:0.05px;word-spacing:-0.6px"><div style="left:2px;top:0;white-space:nowrap">30.08.2013</div></div>
<div style="left:1338px;top:608.27px;width:118px;height:16px;overflow:hidden;font:12.5px/16px 'Liberation Sans';letter-spacing:0.05px;word-spacing:-0.6px"><div style="right:0.5px;top:0;white-space:nowrap">26 900,00</div></div>
<div style="left:1458px;top:608.27px;width:102px;height:16px;overflow:hidden;font:12.5px/16px 'Liberation Sans';letter-spacing:0.05px;word-spacing:-0.6px"><div style="right:0.5px;top:0;white-space:nowrap">26 714,08</div></div>
<div style="left:1562px;top:608.27px;width:85px;height:16px;overflow:hidden;font:12.5px/16px 'Liberation Sans';letter-spacing:0.05px;word-spacing:-0.6px"><div style="right:0px;top:0;white-space:nowrap">0</div></div>
<svg style="left:662px;top:605px" width="6" height="6"><path d="M0 0h6L0 6z" fill="#008000"/></svg>
<svg style="left:987px;top:605px" width="6" height="6"><path d="M0 0h6L0 6z" fill="#008000"/></svg>
<div style="left:13px;top:628.27px;width:188px;height:16px;overflow:hidden;font:12.5px/16px 'Liberation Sans';letter-spacing:0.61px;word-spacing:-0.6px"><div style="left:2.5px;top:0;white-space:nowrap">Санкт-Петербургское государственное бюджетное учреждение</div></div>
<div style="left:203px;top:628.27px;width:144px;height:16px;overflow:hidden;font:12.5px/16px 'Liberation Sans';letter-spacing:0.05px;word-spacing:-0.6px"><div style="left:2px;top:0;white-space:nowrap">-</div></div>
<div style="left:349px;top:628.27px;width:141px;height:16px;overflow:hidden;font:12.5px/16px 'Liberation Sans';letter-spacing:0.70px;word-spacing:-0.6px"><div style="left:2px;top:0;white-space:nowrap">У единственного поставщика</div></div>
<div style="left:492px;top:628.27px;width:168px;height:16px;overflow:hidden;font:12.5px/16px 'Liberation Sans';letter-spacing:0.05px;word-spacing:-0.6px"><div style="left:2px;top:0;white-space:nowrap">-</div></div>
<div style="left:662px;top:628.27px;width:109px;height:16px;overflow:hidden;font:12.5px/16px 'Liberation Sans';letter-spacing:0.05px;word-spacing:-0.6px"><div style="left:2px;top:0;white-space:nowrap">0000004800813154001</div></div>
<div style="left:773px;top:628.27px;width:105px;height:16px;overflow:hidden;font:12.5px/16px 'Liberation Sans';letter-spacing:0.18px;word-spacing:-0.6px"><div style="left:2px;top:0;white-space:nowrap">07/08/2013-ГПД</div></div>
<div style="left:880px;top:628.27px;width:105px;height:16px;overflow:hidden;font:12.5px/16px 'Liberation Sans';letter-spacing:0.61px;word-spacing:-0.6px"><div style="left:2px;top:0;white-space:nowrap">Поставка подметальной машины</div></div>
<div style="left:987px;top:628.27px;width:105px;height:16px;overflow:hidden;font:12.5px/16px 'Liberation Sans';letter-spacing:0.05px;word-spacing:-0.6px"><div style="left:2px;top:0;white-space:nowrap">7816086580</div></div>
<div style="left:1094px;top:628.27px;width:105px;height:16px;overflow:hidden;font:12.5px/16px 'Liberation Sans';letter-spacing:0.55px;word-spacing:-0.6px"><div style="left:2px;top:0;white-space:nowrap">ЗАО &quot;Контакт Инжиниринг&quot;</div></div>
<div style="left:1201px;top:628.27px;width:135px;height:16px;overflow:hidden;font:12.5px/16px 'Liberation Sans';letter-spacing:0.05px;word-spacing:-0.6px"><div style="left:2px;top:0;white-space:nowrap">30.08.2013</div></div>
<div style="left:1338px;top:628.27px;width:118px;height:16px;overflow:hidden;font:12.5px/16px 'Liberation Sans';letter-spacing:0.05px;word-spacing:-0.6px"><div style="right:0.5px;top:0;white-space:nowrap">98 487,00</div></div>
<div style="left:1458px;top:628.27px;width:102px;height:16px;overflow:hidden;font:12.5px/16px 'Liberation Sans';letter-spacing:0.05px;word-spacing:-0.6px"><div style="right:0.5px;top:0;white-space:nowrap">98 487,00</div></div>
<div style="left:1562px;top:628.27px;width:85px;height:16px;overflow:hidden;font:12.5px/16px 'Liberation Sans';letter-spacing:0.05px;word-spacing:-0.6px"><div style="right:0px;top:0;white-space:nowrap">0</div></div>
<svg style="left:662px;top:625px" width="6" height="6"><path d="M0 0h6L0 6z" fill="#008000"/></svg>
<svg style="left:987px;top:625px" width="6" height="6"><path d="M0 0h6L0 6z" fill="#008000"/></svg>
<div style="left:13px;top:648.27px;width:188px;height:16px;overflow:hidden;font:12.5px/16px 'Liberation Sans';letter-spacing:0.61px;word-spacing:-0.6px"><div style="left:2.5px;top:0;white-space:nowrap">Санкт-Петербургское государственное бюджетное учреждение</div></div>
<div style="left:203px;top:648.27px;width:144px;height:16px;overflow:hidden;font:12.5px/16px 'Liberation Sans';letter-spacing:0.05px;word-spacing:-0.6px"><div style="left:2px;top:0;white-space:nowrap">-</div></div>
<div style="left:349px;top:648.27px;width:141px;height:16px;overflow:hidden;font:12.5px/16px 'Liberation Sans';letter-spacing:0.70px;word-spacing:-0.6px"><div style="left:2px;top:0;white-space:nowrap">У единственного поставщика</div></div>
<div style="left:492px;top:648.27px;width:168px;height:16px;overflow:hidden;font:12.5px/16px 'Liberation Sans';letter-spacing:0.05px;word-spacing:-0.6px"><div style="left:2px;top:0;white-space:nowrap">-</div></div>
<div style="left:662px;top:648.27px;width:109px;height:16px;overflow:hidden;font:12.5px/16px 'Liberation Sans';letter-spacing:0.05px;word-spacing:-0.6px"><div style="left:2px;top:0;white-space:nowrap">0000004800813177001</div></div>
<div style="left:773px;top:648.27px;width:105px;height:16px;overflow:hidden;font:12.5px/16px 'Liberation Sans';letter-spacing:0.18px;word-spacing:-0.6px"><div style="left:2px;top:0;white-space:nowrap">08/10/2013-ГПД</div></div>
<div style="left:880px;top:648.27px;width:105px;height:16px;overflow:hidden;font:12.5px/16px 'Liberation Sans';letter-spacing:0.62px;word-spacing:-0.6px"><div style="left:2px;top:0;white-space:nowrap">Передача заказчику</div></div>
<div style="left:987px;top:648.27px;width:105px;height:16px;overflow:hidden;font:12.5px/16px 'Liberation Sans';letter-spacing:0.05px;word-spacing:-0.6px"><div style="left:2px;top:0;white-space:nowrap">7729581148</div></div>
<div style="left:1094px;top:648.27px;width:105px;height:16px;overflow:hidden;font:12.5px/16px 'Liberation Sans';letter-spacing:0.53px;word-spacing:-0.6px"><div style="left:2px;top:0;white-space:nowrap">&quot;БИТ Интеллект&quot;</div></div>
<div style="left:1201px;top:648.27px;width:135px;height:16px;overflow:hidden;font:12.5px/16px 'Liberation Sans';letter-spacing:0.05px;word-spacing:-0.6px"><div style="left:2px;top:0;white-space:nowrap">14.10.2013</div></div>
<div style="left:1338px;top:648.27px;width:118px;height:16px;overflow:hidden;font:12.5px/16px 'Liberation Sans';letter-spacing:0.05px;word-spacing:-0.6px"><div style="right:0.5px;top:0;white-space:nowrap">82 500,00</div></div>
<div style="left:1458px;top:648.27px;width:102px;height:16px;overflow:hidden;font:12.5px/16px 'Liberation Sans';letter-spacing:0.05px;word-spacing:-0.6px"><div style="right:0.5px;top:0;white-space:nowrap">82 500,00</div></div>
<div style="left:1562px;top:648.27px;width:85px;height:16px;overflow:hidden;font:12.5px/16px 'Liberation Sans';letter-spacing:0.05px;word-spacing:-0.6px"><div style="right:0px;top:0;white-space:nowrap">0</div></div>
<svg style="left:662px;top:645px" width="6" height="6"><path d="M0 0h6L0 6z" fill="#008000"/></svg>
<svg style="left:987px;top:645px" width="6" height="6"><path d="M0 0h6L0 6z" fill="#008000"/></svg>
<div style="left:13px;top:668.27px;width:188px;height:16px;overflow:hidden;font:12.5px/16px 'Liberation Sans';letter-spacing:0.61px;word-spacing:-0.6px"><div style="left:2.5px;top:0;white-space:nowrap">Санкт-Петербургское государственное бюджетное учреждение</div></div>
<div style="left:203px;top:668.27px;width:144px;height:16px;overflow:hidden;font:12.5px/16px 'Liberation Sans';letter-spacing:0.05px;word-spacing:-0.6px"><div style="left:2px;top:0;white-space:nowrap">-</div></div>
<div style="left:349px;top:668.27px;width:141px;height:16px;overflow:hidden;font:12.5px/16px 'Liberation Sans';letter-spacing:0.70px;word-spacing:-0.6px"><div style="left:2px;top:0;white-space:nowrap">У единственного поставщика</div></div>
<div style="left:492px;top:668.27px;width:168px;height:16px;overflow:hidden;font:12.5px/16px 'Liberation Sans';letter-spacing:0.05px;word-spacing:-0.6px"><div style="left:2px;top:0;white-space:nowrap">-</div></div>
<div style="left:662px;top:668.27px;width:109px;height:16px;overflow:hidden;font:12.5px/16px 'Liberation Sans';letter-spacing:0.05px;word-spacing:-0.6px"><div style="left:2px;top:0;white-space:nowrap">0000004800813185001</div></div>
<div style="left:773px;top:668.27px;width:105px;height:16px;overflow:hidden;font:12.5px/16px 'Liberation Sans';letter-spacing:0.18px;word-spacing:-0.6px"><div style="left:2px;top:0;white-space:nowrap">09/10/2013-ГПД</div></div>
<div style="left:880px;top:668.27px;width:105px;height:16px;overflow:hidden;font:12.5px/16px 'Liberation Sans';letter-spacing:0.63px;word-spacing:-0.6px"><div style="left:2px;top:0;white-space:nowrap">Ремонт металлоконструкций</div></div>
<div style="left:987px;top:668.27px;width:105px;height:16px;overflow:hidden;font:12.5px/16px 'Liberation Sans';letter-spacing:0.05px;word-spacing:-0.6px"><div style="left:2px;top:0;white-space:nowrap">7810489590</div></div>
<div style="left:1094px;top:668.27px;width:105px;height:16px;overflow:hidden;font:12.5px/16px 'Liberation Sans';letter-spacing:0.58px;word-spacing:-0.6px"><div style="left:2px;top:0;white-space:nowrap">&quot;ПитерСпортСтрой&quot;</div></div>
<div style="left:1201px;top:668.27px;width:135px;height:16px;overflow:hidden;font:12.5px/16px 'Liberation Sans';letter-spacing:0.05px;word-spacing:-0.6px"><div style="left:2px;top:0;white-space:nowrap">25.10.2013</div></div>
<div style="left:1338px;top:668.27px;width:118px;height:16px;overflow:hidden;font:12.5px/16px 'Liberation Sans';letter-spacing:0.05px;word-spacing:-0.6px"><div style="right:0.5px;top:0;white-space:nowrap">28 919,00</div></div>
<div style="left:1458px;top:668.27px;width:102px;height:16px;overflow:hidden;font:12.5px/16px 'Liberation Sans';letter-spacing:0.05px;word-spacing:-0.6px"><div style="right:0.5px;top:0;white-space:nowrap">28 919,00</div></div>
<div style="left:1562px;top:668.27px;width:85px;height:16px;overflow:hidden;font:12.5px/16px 'Liberation Sans';letter-spacing:0.05px;word-spacing:-0.6px"><div style="right:0px;top:0;white-space:nowrap">0</div></div>
<svg style="left:662px;top:665px" width="6" height="6"><path d="M0 0h6L0 6z" fill="#008000"/></svg>
<svg style="left:987px;top:665px" width="6" height="6"><path d="M0 0h6L0 6z" fill="#008000"/></svg>
<div style="left:13px;top:688.27px;width:188px;height:16px;overflow:hidden;font:12.5px/16px 'Liberation Sans';letter-spacing:0.61px;word-spacing:-0.6px"><div style="left:2.5px;top:0;white-space:nowrap">Санкт-Петербургское государственное бюджетное учреждение</div></div>
<div style="left:203px;top:688.27px;width:144px;height:16px;overflow:hidden;font:12.5px/16px 'Liberation Sans';letter-spacing:0.05px;word-spacing:-0.6px"><div style="left:2px;top:0;white-space:nowrap">-</div></div>
<div style="left:349px;top:688.27px;width:141px;height:16px;overflow:hidden;font:12.5px/16px 'Liberation Sans';letter-spacing:0.70px;word-spacing:-0.6px"><div style="left:2px;top:0;white-space:nowrap">У единственного поставщика</div></div>
<div style="left:492px;top:688.27px;width:168px;height:16px;overflow:hidden;font:12.5px/16px 'Liberation Sans';letter-spacing:0.05px;word-spacing:-0.6px"><div style="left:2px;top:0;white-space:nowrap">-</div></div>
<div style="left:662px;top:688.27px;width:109px;height:16px;overflow:hidden;font:12.5px/16px 'Liberation Sans';letter-spacing:0.05px;word-spacing:-0.6px"><div style="left:2px;top:0;white-space:nowrap">0000004800813191001</div></div>
<div style="left:773px;top:688.27px;width:105px;height:16px;overflow:hidden;font:12.5px/16px 'Liberation Sans';letter-spacing:0.05px;word-spacing:-0.6px"><div style="left:2px;top:0;white-space:nowrap">0500007609</div></div>
<div style="left:880px;top:688.27px;width:105px;height:16px;overflow:hidden;font:12.5px/16px 'Liberation Sans';letter-spacing:0.61px;word-spacing:-0.6px"><div style="left:2px;top:0;white-space:nowrap">Выполнение работ</div></div>
<div style="left:987px;top:688.27px;width:105px;height:16px;overflow:hidden;font:12.5px/16px 'Liberation Sans';letter-spacing:0.05px;word-spacing:-0.6px"><div style="left:2px;top:0;white-space:nowrap">7840335245</div></div>
<div style="left:1094px;top:688.27px;width:105px;height:16px;overflow:hidden;font:12.5px/16px 'Liberation Sans';letter-spacing:0.57px;word-spacing:-0.6px"><div style="left:2px;top:0;white-space:nowrap">&quot;Городское управление&quot;</div></div>
<div style="left:1201px;top:688.27px;width:135px;height:16px;overflow:hidden;font:12.5px/16px 'Liberation Sans';letter-spacing:0.05px;word-spacing:-0.6px"><div style="left:2px;top:0;white-space:nowrap">28.10.2013</div></div>
<div style="left:1338px;top:688.27px;width:118px;height:16px;overflow:hidden;font:12.5px/16px 'Liberation Sans';letter-spacing:0.05px;word-spacing:-0.6px"><div style="right:0.5px;top:0;white-space:nowrap">1 799,74</div></div>
<div style="left:1458px;top:688.27px;width:102px;height:16px;overflow:hidden;font:12.5px/16px 'Liberation Sans';letter-spacing:0.05px;word-spacing:-0.6px"><div style="right:0.5px;top:0;white-space:nowrap">1 799,74</div></div>
<div style="left:1562px;top:688.27px;width:85px;height:16px;overflow:hidden;font:12.5px/16px 'Liberation Sans';letter-spacing:0.05px;word-spacing:-0.6px"><div style="right:0px;top:0;white-space:nowrap">0</div></div>
<svg style="left:662px;top:685px" width="6" height="6"><path d="M0 0h6L0 6z" fill="#008000"/></svg>
<svg style="left:773px;top:685px" width="6" height="6"><path d="M0 0h6L0 6z" fill="#008000"/></svg>
<svg style="left:987px;top:685px" width="6" height="6"><path d="M0 0h6L0 6z" fill="#008000"/></svg>
<div style="left:13px;top:708.27px;width:188px;height:16px;overflow:hidden;font:12.5px/16px 'Liberation Sans';letter-spacing:0.61px;word-spacing:-0.6px"><div style="left:2.5px;top:0;white-space:nowrap">Санкт-Петербургское государственное бюджетное учреждение</div></div>
<div style="left:203px;top:708.27px;width:144px;height:16px;overflow:hidden;font:12.5px/16px 'Liberation Sans';letter-spacing:0.05px;word-spacing:-0.6px"><div style="left:2px;top:0;white-space:nowrap">-</div></div>
<div style="left:349px;top:708.27px;width:141px;height:16px;overflow:hidden;font:12.5px/16px 'Liberation Sans';letter-spacing:0.70px;word-spacing:-0.6px"><div style="left:2px;top:0;white-space:nowrap">У единственного поставщика</div></div>
<div style="left:492px;top:708.27px;width:168px;height:16px;overflow:hidden;font:12.5px/16px 'Liberation Sans';letter-spacing:0.05px;word-spacing:-0.6px"><div style="left:2px;top:0;white-space:nowrap">-</div></div>
<div style="left:662px;top:708.27px;width:109px;height:16px;overflow:hidden;font:12.5px/16px 'Liberation Sans';letter-spacing:0.05px;word-spacing:-0.6px"><div style="left:2px;top:0;white-space:nowrap">0000004800813195001</div></div>
<div style="left:773px;top:708.27px;width:105px;height:16px;overflow:hidden;font:12.5px/16px 'Liberation Sans';letter-spacing:0.18px;word-spacing:-0.6px"><div style="left:2px;top:0;white-space:nowrap">219-фх/13</div></div>
<div style="left:880px;top:708.27px;width:105px;height:16px;overflow:hidden;font:12.5px/16px 'Liberation Sans';letter-spacing:0.58px;word-spacing:-0.6px"><div style="left:2px;top:0;white-space:nowrap">Оказание услуг по</div></div>
<div style="left:987px;top:708.27px;width:105px;height:16px;overflow:hidden;font:12.5px/16px 'Liberation Sans';letter-spacing:0.05px;word-spacing:-0.6px"><div style="left:2px;top:0;white-space:nowrap">7804404920</div></div>
<div style="left:1094px;top:708.27px;width:105px;height:16px;overflow:hidden;font:12.5px/16px 'Liberation Sans';letter-spacing:0.54px;word-spacing:-0.6px"><div style="left:2px;top:0;white-space:nowrap">ООО &quot;ЭКЦ &quot;СевЗапЭкспертиза&quot;</div></div>
<div style="left:1201px;top:708.27px;width:135px;height:16px;overflow:hidden;font:12.5px/16px 'Liberation Sans';letter-spacing:0.05px;word-spacing:-0.6px"><div style="left:2px;top:0;white-space:nowrap">14.11.2013</div></div>
<div style="left:1338px;top:708.27px;width:118px;height:16px;overflow:hidden;font:12.5px/16px 'Liberation Sans';letter-spacing:0.05px;word-spacing:-0.6px"><div style="right:0.5px;top:0;white-space:nowrap">60 000,00</div></div>
<div style="left:1458px;top:708.27px;width:102px;height:16px;overflow:hidden;font:12.5px/16px 'Liberation Sans';letter-spacing:0.05px;word-spacing:-0.6px"><div style="right:0.5px;top:0;white-space:nowrap">45 000,00</div></div>
<div style="left:1562px;top:708.27px;width:85px;height:16px;overflow:hidden;font:12.5px/16px 'Liberation Sans';letter-spacing:0.05px;word-spacing:-0.6px"><div style="right:0px;top:0;white-space:nowrap">0</div></div>
<svg style="left:662px;top:705px" width="6" height="6"><path d="M0 0h6L0 6z" fill="#008000"/></svg>
<svg style="left:987px;top:705px" width="6" height="6"><path d="M0 0h6L0 6z" fill="#008000"/></svg>
<div style="left:13px;top:728.27px;width:188px;height:16px;overflow:hidden;font:12.5px/16px 'Liberation Sans';letter-spacing:0.61px;word-spacing:-0.6px"><div style="left:2.5px;top:0;white-space:nowrap">Санкт-Петербургское государственное бюджетное учреждение</div></div>
<div style="left:203px;top:728.27px;width:144px;height:16px;overflow:hidden;font:12.5px/16px 'Liberation Sans';letter-spacing:0.05px;word-spacing:-0.6px"><div style="left:2px;top:0;white-space:nowrap">-</div></div>
<div style="left:349px;top:728.27px;width:141px;height:16px;overflow:hidden;font:12.5px/16px 'Liberation Sans';letter-spacing:0.54px;word-spacing:-0.6px"><div style="left:2px;top:0;white-space:nowrap">94-ФЗ У единственного поставщика</div></div>
<div style="left:492px;top:728.27px;width:168px;height:16px;overflow:hidden;font:12.5px/16px 'Liberation Sans';letter-spacing:0.36px;word-spacing:-0.6px"><div style="left:2px;top:0;white-space:nowrap">Пункт 2.1 части 2 статьи 55 Закона</div></div>
<div style="left:662px;top:728.27px;width:109px;height:16px;overflow:hidden;font:12.5px/16px 'Liberation Sans';letter-spacing:0.05px;word-spacing:-0.6px"><div style="left:2px;top:0;white-space:nowrap">0372200273113000001</div></div>
<div style="left:773px;top:728.27px;width:105px;height:16px;overflow:hidden;font:12.5px/16px 'Liberation Sans';letter-spacing:0.05px;word-spacing:-0.6px"><div style="left:2px;top:0;white-space:nowrap">64620</div></div>
<div style="left:880px;top:728.27px;width:105px;height:16px;overflow:hidden;font:12.5px/16px 'Liberation Sans';letter-spacing:0.63px;word-spacing:-0.6px"><div style="left:2px;top:0;white-space:nowrap">Потребление электроэнергии</div></div>
<div style="left:987px;top:728.27px;width:105px;height:16px;overflow:hidden;font:12.5px/16px 'Liberation Sans';letter-spacing:0.05px;word-spacing:-0.6px"><div style="left:2px;top:0;white-space:nowrap">7841322249</div></div>
<div style="left:1094px;top:728.27px;width:105px;height:16px;overflow:hidden;font:12.5px/16px 'Liberation Sans';letter-spacing:0.58px;word-spacing:-0.6px"><div style="left:2px;top:0;white-space:nowrap">&quot;Петербургская сбытовая&quot;</div></div>
<div style="left:1201px;top:728.27px;width:135px;height:16px;overflow:hidden;font:12.5px/16px 'Liberation Sans';letter-spacing:0.05px;word-spacing:-0.6px"><div style="left:2px;top:0;white-space:nowrap">01.02.2013</div></div>
<div style="left:1338px;top:728.27px;width:118px;height:16px;overflow:hidden;font:12.5px/16px 'Liberation Sans';letter-spacing:0.05px;word-spacing:-0.6px"><div style="right:0.5px;top:0;white-space:nowrap">576 300,00</div></div>
<div style="left:1458px;top:728.27px;width:102px;height:16px;overflow:hidden;font:12.5px/16px 'Liberation Sans';letter-spacing:0.05px;word-spacing:-0.6px"><div style="right:0.5px;top:0;white-space:nowrap">433 961,26</div></div>
<div style="left:1562px;top:728.27px;width:85px;height:16px;overflow:hidden;font:12.5px/16px 'Liberation Sans';letter-spacing:0.05px;word-spacing:-0.6px"><div style="right:0px;top:0;white-space:nowrap">0</div></div>
<svg style="left:662px;top:725px" width="6" height="6"><path d="M0 0h6L0 6z" fill="#008000"/></svg>
<svg style="left:773px;top:725px" width="6" height="6"><path d="M0 0h6L0 6z" fill="#008000"/></svg>
<svg style="left:987px;top:725px" width="6" height="6"><path d="M0 0h6L0 6z" fill="#008000"/></svg>
<div style="left:13px;top:748.27px;width:188px;height:16px;overflow:hidden;font:12.5px/16px 'Liberation Sans';letter-spacing:0.61px;word-spacing:-0.6px"><div style="left:2.5px;top:0;white-space:nowrap">Санкт-Петербургское государственное бюджетное учреждение</div></div>
<div style="left:203px;top:748.27px;width:144px;height:16px;overflow:hidden;font:12.5px/16px 'Liberation Sans';letter-spacing:0.05px;word-spacing:-0.6px"><div style="left:2px;top:0;white-space:nowrap">-</div></div>
<div style="left:349px;top:748.27px;width:141px;height:16px;overflow:hidden;font:12.5px/16px 'Liberation Sans';letter-spacing:0.54px;word-spacing:-0.6px"><div style="left:2px;top:0;white-space:nowrap">94-ФЗ У единственного поставщика</div></div>
<div style="left:492px;top:748.27px;width:168px;height:16px;overflow:hidden;font:12.5px/16px 'Liberation Sans';letter-spacing:0.10px;word-spacing:-0.6px"><div style="left:3px;top:0;white-space:nowrap">#######################</div></div>
<div style="left:662px;top:748.27px;width:109px;height:16px;overflow:hidden;font:12.5px/16px 'Liberation Sans';letter-spacing:0.05px;word-spacing:-0.6px"><div style="left:2px;top:0;white-space:nowrap">0372200273113000002</div></div>
<div style="left:773px;top:748.27px;width:105px;height:16px;overflow:hidden;font:12.5px/16px 'Liberation Sans';letter-spacing:0.14px;word-spacing:-0.6px"><div style="left:2px;top:0;white-space:nowrap">10-45590/10-АФ</div></div>
<div style="left:880px;top:748.27px;width:105px;height:16px;overflow:hidden;font:12.5px/16px 'Liberation Sans';letter-spacing:0.60px;word-spacing:-0.6px"><div style="left:2px;top:0;white-space:nowrap">Услуги по распределению</div></div>
<div style="left:987px;top:748.27px;width:105px;height:16px;overflow:hidden;font:12.5px/16px 'Liberation Sans';letter-spacing:0.05px;word-spacing:-0.6px"><div style="left:2px;top:0;white-space:nowrap">7830000426</div></div>
<div style="left:1094px;top:748.27px;width:105px;height:16px;overflow:hidden;font:12.5px/16px 'Liberation Sans';letter-spacing:0.63px;word-spacing:-0.6px"><div style="left:2px;top:0;white-space:nowrap">Государственное унитарное</div></div>
<div style="left:1201px;top:748.27px;width:135px;height:16px;overflow:hidden;font:12.5px/16px 'Liberation Sans';letter-spacing:0.05px;word-spacing:-0.6px"><div style="left:2px;top:0;white-space:nowrap">01.01.2013</div></div>
<div style="left:1338px;top:748.27px;width:118px;height:16px;overflow:hidden;font:12.5px/16px 'Liberation Sans';letter-spacing:0.05px;word-spacing:-0.6px"><div style="right:0.5px;top:0;white-space:nowrap">92 900,00</div></div>
<div style="left:1458px;top:748.27px;width:102px;height:16px;overflow:hidden;font:12.5px/16px 'Liberation Sans';letter-spacing:0.05px;word-spacing:-0.6px"><div style="right:0.5px;top:0;white-space:nowrap">98 950,79</div></div>
<div style="left:1562px;top:748.27px;width:85px;height:16px;overflow:hidden;font:12.5px/16px 'Liberation Sans';letter-spacing:0.05px;word-spacing:-0.6px"><div style="right:0px;top:0;white-space:nowrap">0</div></div>
<svg style="left:662px;top:745px" width="6" height="6"><path d="M0 0h6L0 6z" fill="#008000"/></svg>
<svg style="left:987px;top:745px" width="6" height="6"><path d="M0 0h6L0 6z" fill="#008000"/></svg>
<div style="left:13px;top:768.27px;width:188px;height:16px;overflow:hidden;font:12.5px/16px 'Liberation Sans';letter-spacing:0.61px;word-spacing:-0.6px"><div style="left:2.5px;top:0;white-space:nowrap">Санкт-Петербургское государственное бюджетное учреждение</div></div>
<div style="left:203px;top:768.27px;width:144px;height:16px;overflow:hidden;font:12.5px/16px 'Liberation Sans';letter-spacing:0.05px;word-spacing:-0.6px"><div style="left:2px;top:0;white-space:nowrap">0372200273113000002</div></div>
<div style="left:349px;top:768.27px;width:141px;height:16px;overflow:hidden;font:12.5px/16px 'Liberation Sans';letter-spacing:0.62px;word-spacing:-0.6px"><div style="left:2px;top:0;white-space:nowrap">Электронный аукцион</div></div>
<div style="left:492px;top:768.27px;width:168px;height:16px;overflow:hidden;font:12.5px/16px 'Liberation Sans';letter-spacing:0.05px;word-spacing:-0.6px"><div style="left:2px;top:0;white-space:nowrap">-</div></div>
<div style="left:662px;top:768.27px;width:109px;height:16px;overflow:hidden;font:12.5px/16px 'Liberation Sans';letter-spacing:0.05px;word-spacing:-0.6px"><div style="left:2px;top:0;white-space:nowrap">0372200273113000003</div></div>
<div style="left:773px;top:768.27px;width:105px;height:16px;overflow:hidden;font:12.5px/16px 'Liberation Sans';letter-spacing:0.10px;word-spacing:-0.6px"><div style="left:2px;top:0;white-space:nowrap">01/02/2013-А</div></div>
<div style="left:880px;top:768.27px;width:105px;height:16px;overflow:hidden;font:12.5px/16px 'Liberation Sans';letter-spacing:0.61px;word-spacing:-0.6px"><div style="left:2px;top:0;white-space:nowrap">оказание информационных услуг</div></div>
<div style="left:987px;top:768.27px;width:105px;height:16px;overflow:hidden;font:12.5px/16px 'Liberation Sans';letter-spacing:0.05px;word-spacing:-0.6px"><div style="left:2px;top:0;white-space:nowrap">7827004830</div></div>
<div style="left:1094px;top:768.27px;width:105px;height:16px;overflow:hidden;font:12.5px/16px 'Liberation Sans';letter-spacing:0.60px;word-spacing:-0.6px"><div style="left:2px;top:0;white-space:nowrap">Общество с ограниченной</div></div>
<div style="left:1201px;top:768.27px;width:135px;height:16px;overflow:hidden;font:12.5px/16px 'Liberation Sans';letter-spacing:0.05px;word-spacing:-0.6px"><div style="left:2px;top:0;white-space:nowrap">01.03.2013</div></div>
<div style="left:1338px;top:768.27px;width:118px;height:16px;overflow:hidden;font:12.5px/16px 'Liberation Sans';letter-spacing:0.05px;word-spacing:-0.6px"><div style="right:0.5px;top:0;white-space:nowrap">320 803,00</div></div>
<div style="left:1458px;top:768.27px;width:102px;height:16px;overflow:hidden;font:12.5px/16px 'Liberation Sans';letter-spacing:0.05px;word-spacing:-0.6px"><div style="right:0.5px;top:0;white-space:nowrap">302 198,00</div></div>
<div style="left:1562px;top:768.27px;width:85px;height:16px;overflow:hidden;font:12.5px/16px 'Liberation Sans';letter-spacing:0.05px;word-spacing:-0.6px"><div style="right:0px;top:0;white-space:nowrap">18 605</div></div>
<svg style="left:203px;top:765px" width="6" height="6"><path d="M0 0h6L0 6z" fill="#008000"/></svg>
<svg style="left:662px;top:765px" width="6" height="6"><path d="M0 0h6L0 6z" fill="#008000"/></svg>
<svg style="left:987px;top:765px" width="6" height="6"><path d="M0 0h6L0 6z" fill="#008000"/></svg>
<div style="left:13px;top:788.27px;width:188px;height:16px;overflow:hidden;font:12.5px/16px 'Liberation Sans';letter-spacing:0.61px;word-spacing:-0.6px"><div style="left:2.5px;top:0;white-space:nowrap">Санкт-Петербургское государственное бюджетное учреждение</div></div>
<div style="left:203px;top:788.27px;width:144px;height:16px;overflow:hidden;font:12.5px/16px 'Liberation Sans';letter-spacing:0.05px;word-spacing:-0.6px"><div style="left:2px;top:0;white-space:nowrap">-</div></div>
<div style="left:349px;top:788.27px;width:141px;height:16px;overflow:hidden;font:12.5px/16px 'Liberation Sans';letter-spacing:0.54px;word-spacing:-0.6px"><div style="left:2px;top:0;white-space:nowrap">94-ФЗ У единственного поставщика</div></div>
<div style="left:492px;top:788.27px;width:168px;height:16px;overflow:hidden;font:12.5px/16px 'Liberation Sans';letter-spacing:0.10px;word-spacing:-0.6px"><div style="left:3px;top:0;white-space:nowrap">#######################</div></div>
<div style="left:662px;top:788.27px;width:109px;height:16px;overflow:hidden;font:12.5px/16px 'Liberation Sans';letter-spacing:0.05px;word-spacing:-0.6px"><div style="left:2px;top:0;white-space:nowrap">0372200273113000004</div></div>
<div style="left:773px;top:788.27px;width:105px;height:16px;overflow:hidden;font:12.5px/16px 'Liberation Sans';letter-spacing:0.05px;word-spacing:-0.6px"><div style="left:2px;top:0;white-space:nowrap">57-13</div></div>
<div style="left:880px;top:788.27px;width:105px;height:16px;overflow:hidden;font:12.5px/16px 'Liberation Sans';letter-spacing:0.58px;word-spacing:-0.6px"><div style="left:2px;top:0;white-space:nowrap">Содержание и текущий ремонт</div></div>
<div style="left:987px;top:788.27px;width:105px;height:16px;overflow:hidden;font:12.5px/16px 'Liberation Sans';letter-spacing:0.05px;word-spacing:-0.6px"><div style="left:2px;top:0;white-space:nowrap">7805460959</div></div>
<div style="left:1094px;top:788.27px;width:105px;height:16px;overflow:hidden;font:12.5px/16px 'Liberation Sans';letter-spacing:0.55px;word-spacing:-0.6px"><div style="left:2px;top:0;white-space:nowrap">ООО &quot;Жилкомсервис&quot;</div></div>
<div style="left:1201px;top:788.27px;width:135px;height:16px;overflow:hidden;font:12.5px/16px 'Liberation Sans';letter-spacing:0.05px;word-spacing:-0.6px"><div style="left:2px;top:0;white-space:nowrap">04.03.2013</div></div>
<div style="left:1338px;top:788.27px;width:118px;height:16px;overflow:hidden;font:12.5px/16px 'Liberation Sans';letter-spacing:0.05px;word-spacing:-0.6px"><div style="right:0.5px;top:0;white-space:nowrap">747 153,10</div></div>
<div style="left:1458px;top:788.27px;width:102px;height:16px;overflow:hidden;font:12.5px/16px 'Liberation Sans';letter-spacing:0.05px;word-spacing:-0.6px"><div style="right:0.5px;top:0;white-space:nowrap">620 149,44</div></div>
<div style="left:1562px;top:788.27px;width:85px;height:16px;overflow:hidden;font:12.5px/16px 'Liberation Sans';letter-spacing:0.05px;word-spacing:-0.6px"><div style="right:0px;top:0;white-space:nowrap">0</div></div>
<svg style="left:662px;top:785px" width="6" height="6"><path d="M0 0h6L0 6z" fill="#008000"/></svg>
<svg style="left:987px;top:785px" width="6" height="6"><path d="M0 0h6L0 6z" fill="#008000"/></svg>
<div style="left:13px;top:808.27px;width:188px;height:16px;overflow:hidden;font:12.5px/16px 'Liberation Sans';letter-spacing:0.61px;word-spacing:-0.6px"><div style="left:2.5px;top:0;white-space:nowrap">Санкт-Петербургское государственное бюджетное учреждение</div></div>
<div style="left:203px;top:808.27px;width:144px;height:16px;overflow:hidden;font:12.5px/16px 'Liberation Sans';letter-spacing:0.05px;word-spacing:-0.6px"><div style="left:2px;top:0;white-space:nowrap">-</div></div>
<div style="left:349px;top:808.27px;width:141px;height:16px;overflow:hidden;font:12.5px/16px 'Liberation Sans';letter-spacing:0.54px;word-spacing:-0.6px"><div style="left:2px;top:0;white-space:nowrap">94-ФЗ У единственного поставщика</div></div>
<div style="left:492px;top:808.27px;width:168px;height:16px;overflow:hidden;font:12.5px/16px 'Liberation Sans';letter-spacing:0.10px;word-spacing:-0.6px"><div style="left:3px;top:0;white-space:nowrap">#######################</div></div>
<div style="left:662px;top:808.27px;width:109px;height:16px;overflow:hidden;font:12.5px/16px 'Liberation Sans';letter-spacing:0.05px;word-spacing:-0.6px"><div style="left:2px;top:0;white-space:nowrap">0372200273113000005</div></div>
<div style="left:773px;top:808.27px;width:105px;height:16px;overflow:hidden;font:12.5px/16px 'Liberation Sans';letter-spacing:0.20px;word-spacing:-0.6px"><div style="left:2px;top:0;white-space:nowrap">23-д</div></div>
<div style="left:880px;top:808.27px;width:105px;height:16px;overflow:hidden;font:12.5px/16px 'Liberation Sans';letter-spacing:0.58px;word-spacing:-0.6px"><div style="left:2px;top:0;white-space:nowrap">Содержание и текущий ремонт</div></div>
<div style="left:987px;top:808.27px;width:105px;height:16px;overflow:hidden;font:12.5px/16px 'Liberation Sans';letter-spacing:0.05px;word-spacing:-0.6px"><div style="left:2px;top:0;white-space:nowrap">7805465516</div></div>
<div style="left:1094px;top:808.27px;width:105px;height:16px;overflow:hidden;font:12.5px/16px 'Liberation Sans';letter-spacing:0.55px;word-spacing:-0.6px"><div style="left:2px;top:0;white-space:nowrap">ООО &quot;Жилкомсервис&quot;</div></div>
<div style="left:1201px;top:808.27px;width:135px;height:16px;overflow:hidden;font:12.5px/16px 'Liberation Sans';letter-spacing:0.05px;word-spacing:-0.6px"><div style="left:2px;top:0;white-space:nowrap">05.03.2013</div></div>
<div style="left:1338px;top:808.27px;width:118px;height:16px;overflow:hidden;font:12.5px/16px 'Liberation Sans';letter-spacing:0.05px;word-spacing:-0.6px"><div style="right:0.5px;top:0;white-space:nowrap">63 766,92</div></div>
<div style="left:1458px;top:808.27px;width:102px;height:16px;overflow:hidden;font:12.5px/16px 'Liberation Sans';letter-spacing:0.05px;word-spacing:-0.6px"><div style="right:0.5px;top:0;white-space:nowrap">63 766,92</div></div>
<div style="left:1562px;top:808.27px;width:85px;height:16px;overflow:hidden;font:12.5px/16px 'Liberation Sans';letter-spacing:0.05px;word-spacing:-0.6px"><div style="right:0px;top:0;white-space:nowrap">0</div></div>
<svg style="left:662px;top:805px" width="6" height="6"><path d="M0 0h6L0 6z" fill="#008000"/></svg>
<svg style="left:987px;top:805px" width="6" height="6"><path d="M0 0h6L0 6z" fill="#008000"/></svg>
<div style="left:13px;top:828.27px;width:188px;height:16px;overflow:hidden;font:12.5px/16px 'Liberation Sans';letter-spacing:0.61px;word-spacing:-0.6px"><div style="left:2.5px;top:0;white-space:nowrap">Санкт-Петербургское государственное бюджетное учреждение</div></div>
<div style="left:203px;top:828.27px;width:144px;height:16px;overflow:hidden;font:12.5px/16px 'Liberation Sans';letter-spacing:0.05px;word-spacing:-0.6px"><div style="left:2px;top:0;white-space:nowrap">0372200273113000006</div></div>
<div style="left:349px;top:828.27px;width:141px;height:16px;overflow:hidden;font:12.5px/16px 'Liberation Sans';letter-spacing:0.51px;word-spacing:-0.6px"><div style="left:2px;top:0;white-space:nowrap">Запрос котировок 94-ФЗ</div></div>
<div style="left:492px;top:828.27px;width:168px;height:16px;overflow:hidden;font:12.5px/16px 'Liberation Sans';letter-spacing:0.05px;word-spacing:-0.6px"><div style="left:2px;top:0;white-space:nowrap">-</div></div>
<div style="left:662px;top:828.27px;width:109px;height:16px;overflow:hidden;font:12.5px/16px 'Liberation Sans';letter-spacing:0.05px;word-spacing:-0.6px"><div style="left:2px;top:0;white-space:nowrap">0372200273113000006</div></div>
<div style="left:773px;top:828.27px;width:105px;height:16px;overflow:hidden;font:12.5px/16px 'Liberation Sans';letter-spacing:0.14px;word-spacing:-0.6px"><div style="left:2px;top:0;white-space:nowrap">01/03/2013-ЗК</div></div>
<div style="left:880px;top:828.27px;width:105px;height:16px;overflow:hidden;font:12.5px/16px 'Liberation Sans';letter-spacing:0.60px;word-spacing:-0.6px"><div style="left:2px;top:0;white-space:nowrap">Услуги по сопровождению</div></div>
<div style="left:987px;top:828.27px;width:105px;height:16px;overflow:hidden;font:12.5px/16px 'Liberation Sans';letter-spacing:0.05px;word-spacing:-0.6px"><div style="left:2px;top:0;white-space:nowrap">7811470401</div></div>
<div style="left:1094px;top:828.27px;width:105px;height:16px;overflow:hidden;font:12.5px/16px 'Liberation Sans';letter-spacing:0.48px;word-spacing:-0.6px"><div style="left:2px;top:0;white-space:nowrap">&quot;АП: Бюджет - Консалтинг&quot;</div></div>
<div style="left:1201px;top:828.27px;width:135px;height:16px;overflow:hidden;font:12.5px/16px 'Liberation Sans';letter-spacing:0.05px;word-spacing:-0.6px"><div style="left:2px;top:0;white-space:nowrap">08.03.2013</div></div>
<div style="left:1338px;top:828.27px;width:118px;height:16px;overflow:hidden;font:12.5px/16px 'Liberation Sans';letter-spacing:0.05px;word-spacing:-0.6px"><div style="right:0.5px;top:0;white-space:nowrap">64 000,00</div></div>
<div style="left:1458px;top:828.27px;width:102px;height:16px;overflow:hidden;font:12.5px/16px 'Liberation Sans';letter-spacing:0.05px;word-spacing:-0.6px"><div style="right:0.5px;top:0;white-space:nowrap">56 000,00</div></div>
<div style="left:1562px;top:828.27px;width:85px;height:16px;overflow:hidden;font:12.5px/16px 'Liberation Sans';letter-spacing:0.05px;word-spacing:-0.6px"><div style="right:0px;top:0;white-space:nowrap">8 000</div></div>
<svg style="left:203px;top:825px" width="6" height="6"><path d="M0 0h6L0 6z" fill="#008000"/></svg>
<svg style="left:662px;top:825px" width="6" height="6"><path d="M0 0h6L0 6z" fill="#008000"/></svg>
<svg style="left:987px;top:825px" width="6" height="6"><path d="M0 0h6L0 6z" fill="#008000"/></svg>
<div style="left:13px;top:848.27px;width:188px;height:16px;overflow:hidden;font:12.5px/16px 'Liberation Sans';letter-spacing:0.61px;word-spacing:-0.6px"><div style="left:2.5px;top:0;white-space:nowrap">Санкт-Петербургское государственное бюджетное учреждение</div></div>
<div style="left:203px;top:848.27px;width:144px;height:16px;overflow:hidden;font:12.5px/16px 'Liberation Sans';letter-spacing:0.05px;word-spacing:-0.6px"><div style="left:2px;top:0;white-space:nowrap">-</div></div>
<div style="left:349px;top:848.27px;width:141px;height:16px;overflow:hidden;font:12.5px/16px 'Liberation Sans';letter-spacing:0.54px;word-spacing:-0.6px"><div style="left:2px;top:0;white-space:nowrap">94-ФЗ У единственного поставщика</div></div>
<div style="left:492px;top:848.27px;width:168px;height:16px;overflow:hidden;font:12.5px/16px 'Liberation Sans';letter-spacing:0.10px;word-spacing:-0.6px"><div style="left:3px;top:0;white-space:nowrap">#######################</div></div>
<div style="left:662px;top:848.27px;width:109px;height:16px;overflow:hidden;font:12.5px/16px 'Liberation Sans';letter-spacing:0.05px;word-spacing:-0.6px"><div style="left:2px;top:0;white-space:nowrap">0372200273113000007</div></div>
<div style="left:773px;top:848.27px;width:105px;height:16px;overflow:hidden;font:12.5px/16px 'Liberation Sans';letter-spacing:0.14px;word-spacing:-0.6px"><div style="left:2px;top:0;white-space:nowrap">06/71-к</div></div>
<div style="left:880px;top:848.27px;width:105px;height:16px;overflow:hidden;font:12.5px/16px 'Liberation Sans';letter-spacing:0.61px;word-spacing:-0.6px"><div style="left:2px;top:0;white-space:nowrap">Потребление тепловой энергии</div></div>
<div style="left:987px;top:848.27px;width:105px;height:16px;overflow:hidden;font:12.5px/16px 'Liberation Sans';letter-spacing:0.05px;word-spacing:-0.6px"><div style="left:2px;top:0;white-space:nowrap">7805017909</div></div>
<div style="left:1094px;top:848.27px;width:105px;height:16px;overflow:hidden;font:12.5px/16px 'Liberation Sans';letter-spacing:0.55px;word-spacing:-0.6px"><div style="left:2px;top:0;white-space:nowrap">ГУПРЭП &quot;Строитель&quot;</div></div>
<div style="left:1201px;top:848.27px;width:135px;height:16px;overflow:hidden;font:12.5px/16px 'Liberation Sans';letter-spacing:0.05px;word-spacing:-0.6px"><div style="left:2px;top:0;white-space:nowrap">11.03.2013</div></div>
<div style="left:1338px;top:848.27px;width:118px;height:16px;overflow:hidden;font:12.5px/16px 'Liberation Sans';letter-spacing:0.05px;word-spacing:-0.6px"><div style="right:0.5px;top:0;white-space:nowrap">577 855,08</div></div>
<div style="left:1458px;top:848.27px;width:102px;height:16px;overflow:hidden;font:12.5px/16px 'Liberation Sans';letter-spacing:0.05px;word-spacing:-0.6px"><div style="right:0.5px;top:0;white-space:nowrap">604 640,04</div></div>
<div style="left:1562px;top:848.27px;width:85px;height:16px;overflow:hidden;font:12.5px/16px 'Liberation Sans';letter-spacing:0.05px;word-spacing:-0.6px"><div style="right:0px;top:0;white-space:nowrap">0</div></div>
<svg style="left:662px;top:845px" width="6" height="6"><path d="M0 0h6L0 6z" fill="#008000"/></svg>
<svg style="left:987px;top:845px" width="6" height="6"><path d="M0 0h6L0 6z" fill="#008000"/></svg>
<div style="left:13px;top:868.27px;width:188px;height:16px;overflow:hidden;font:12.5px/16px 'Liberation Sans';letter-spacing:0.61px;word-spacing:-0.6px"><div style="left:2.5px;top:0;white-space:nowrap">Санкт-Петербургское государственное бюджетное учреждение</div></div>
<div style="left:203px;top:868.27px;width:144px;height:16px;overflow:hidden;font:12.5px/16px 'Liberation Sans';letter-spacing:0.05px;word-spacing:-0.6px"><div style="left:2px;top:0;white-space:nowrap">0372200273113000003</div></div>
<div style="left:349px;top:868.27px;width:141px;height:16px;overflow:hidden;font:12.5px/16px 'Liberation Sans';letter-spacing:0.62px;word-spacing:-0.6px"><div style="left:2px;top:0;white-space:nowrap">Электронный аукцион</div></div>
<div style="left:492px;top:868.27px;width:168px;height:16px;overflow:hidden;font:12.5px/16px 'Liberation Sans';letter-spacing:0.05px;word-spacing:-0.6px"><div style="left:2px;top:0;white-space:nowrap">-</div></div>
<div style="left:662px;top:868.27px;width:109px;height:16px;overflow:hidden;font:12.5px/16px 'Liberation Sans';letter-spacing:0.05px;word-spacing:-0.6px"><div style="left:2px;top:0;white-space:nowrap">0372200273113000008</div></div>
<div style="left:773px;top:868.27px;width:105px;height:16px;overflow:hidden;font:12.5px/16px 'Liberation Sans';letter-spacing:0.10px;word-spacing:-0.6px"><div style="left:2px;top:0;white-space:nowrap">02/03/2013-А</div></div>
<div style="left:880px;top:868.27px;width:105px;height:16px;overflow:hidden;font:12.5px/16px 'Liberation Sans';letter-spacing:0.58px;word-spacing:-0.6px"><div style="left:2px;top:0;white-space:nowrap">Оказание услуг по</div></div>
<div style="left:987px;top:868.27px;width:105px;height:16px;overflow:hidden;font:12.5px/16px 'Liberation Sans';letter-spacing:0.05px;word-spacing:-0.6px"><div style="left:2px;top:0;white-space:nowrap">7839444955</div></div>
<div style="left:1094px;top:868.27px;width:105px;height:16px;overflow:hidden;font:12.5px/16px 'Liberation Sans';letter-spacing:0.61px;word-spacing:-0.6px"><div style="left:2px;top:0;white-space:nowrap">Торгово-инженерная компания</div></div>
<div style="left:1201px;top:868.27px;width:135px;height:16px;overflow:hidden;font:12.5px/16px 'Liberation Sans';letter-spacing:0.05px;word-spacing:-0.6px"><div style="left:2px;top:0;white-space:nowrap">12.03.2013</div></div>
<div style="left:1338px;top:868.27px;width:118px;height:16px;overflow:hidden;font:12.5px/16px 'Liberation Sans';letter-spacing:0.05px;word-spacing:-0.6px"><div style="right:0.5px;top:0;white-space:nowrap">766 796,30</div></div>
<div style="left:1458px;top:868.27px;width:102px;height:16px;overflow:hidden;font:12.5px/16px 'Liberation Sans';letter-spacing:0.05px;word-spacing:-0.6px"><div style="right:0.5px;top:0;white-space:nowrap">388 814,50</div></div>
<div style="left:1562px;top:868.27px;width:85px;height:16px;overflow:hidden;font:12.5px/16px 'Liberation Sans';letter-spacing:0.05px;word-spacing:-0.6px"><div style="right:0px;top:0;white-space:nowrap">377 981</div></div>
<svg style="left:203px;top:865px" width="6" height="6"><path d="M0 0h6L0 6z" fill="#008000"/></svg>
<svg style="left:662px;top:865px" width="6" height="6"><path d="M0 0h6L0 6z" fill="#008000"/></svg>
<svg style="left:987px;top:865px" width="6" height="6"><path d="M0 0h6L0 6z" fill="#008000"/></svg>
<div style="left:13px;top:888.27px;width:188px;height:16px;overflow:hidden;font:12.5px/16px 'Liberation Sans';letter-spacing:0.61px;word-spacing:-0.6px"><div style="left:2.5px;top:0;white-space:nowrap">Санкт-Петербургское государственное бюджетное учреждение</div></div>
<div style="left:203px;top:888.27px;width:144px;height:16px;overflow:hidden;font:12.5px/16px 'Liberation Sans';letter-spacing:0.05px;word-spacing:-0.6px"><div style="left:2px;top:0;white-space:nowrap">0372200273113000005</div></div>
<div style="left:349px;top:888.27px;width:141px;height:16px;overflow:hidden;font:12.5px/16px 'Liberation Sans';letter-spacing:0.62px;word-spacing:-0.6px"><div style="left:2px;top:0;white-space:nowrap">Электронный аукцион</div></div>
<div style="left:492px;top:888.27px;width:168px;height:16px;overflow:hidden;font:12.5px/16px 'Liberation Sans';letter-spacing:0.05px;word-spacing:-0.6px"><div style="left:2px;top:0;white-space:nowrap">-</div></div>
<div style="left:662px;top:888.27px;width:109px;height:16px;overflow:hidden;font:12.5px/16px 'Liberation Sans';letter-spacing:0.05px;word-spacing:-0.6px"><div style="left:2px;top:0;white-space:nowrap">0372200273113000009</div></div>
<div style="left:773px;top:888.27px;width:105px;height:16px;overflow:hidden;font:12.5px/16px 'Liberation Sans';letter-spacing:0.09px;word-spacing:-0.6px"><div style="left:2px;top:0;white-space:nowrap">03/03/2013 - А</div></div>
<div style="left:880px;top:888.27px;width:105px;height:16px;overflow:hidden;font:12.5px/16px 'Liberation Sans';letter-spacing:0.60px;word-spacing:-0.6px"><div style="left:2px;top:0;white-space:nowrap">Поставка питьевой воды</div></div>
<div style="left:987px;top:888.27px;width:105px;height:16px;overflow:hidden;font:12.5px/16px 'Liberation Sans';letter-spacing:0.05px;word-spacing:-0.6px"><div style="left:2px;top:0;white-space:nowrap">7806446690</div></div>
<div style="left:1094px;top:888.27px;width:105px;height:16px;overflow:hidden;font:12.5px/16px 'Liberation Sans';letter-spacing:0.53px;word-spacing:-0.6px"><div style="left:2px;top:0;white-space:nowrap">ООО «Акваполюс»</div></div>
<div style="left:1201px;top:888.27px;width:135px;height:16px;overflow:hidden;font:12.5px/16px 'Liberation Sans';letter-spacing:0.05px;word-spacing:-0.6px"><div style="left:2px;top:0;white-space:nowrap">12.03.2013</div></div>
<div style="left:1338px;top:888.27px;width:118px;height:16px;overflow:hidden;font:12.5px/16px 'Liberation Sans';letter-spacing:0.05px;word-spacing:-0.6px"><div style="right:0.5px;top:0;white-space:nowrap">160 100,00</div></div>
<div style="left:1458px;top:888.27px;width:102px;height:16px;overflow:hidden;font:12.5px/16px 'Liberation Sans';letter-spacing:0.05px;word-spacing:-0.6px"><div style="right:0.5px;top:0;white-space:nowrap">130 560,00</div></div>
<div style="left:1562px;top:888.27px;width:85px;height:16px;overflow:hidden;font:12.5px/16px 'Liberation Sans';letter-spacing:0.05px;word-spacing:-0.6px"><div style="right:0px;top:0;white-space:nowrap">14 597</div></div>
<svg style="left:203px;top:885px" width="6" height="6"><path d="M0 0h6L0 6z" fill="#008000"/></svg>
<svg style="left:662px;top:885px" width="6" height="6"><path d="M0 0h6L0 6z" fill="#008000"/></svg>
<svg style="left:987px;top:885px" width="6" height="6"><path d="M0 0h6L0 6z" fill="#008000"/></svg>
<div style="left:13px;top:908.27px;width:188px;height:16px;overflow:hidden;font:12.5px/16px 'Liberation Sans';letter-spacing:0.61px;word-spacing:-0.6px"><div style="left:2.5px;top:0;white-space:nowrap">Санкт-Петербургское государственное бюджетное учреждение</div></div>
<div style="left:203px;top:908.27px;width:144px;height:16px;overflow:hidden;font:12.5px/16px 'Liberation Sans';letter-spacing:0.05px;word-spacing:-0.6px"><div style="left:2px;top:0;white-space:nowrap">-</div></div>
<div style="left:349px;top:908.27px;width:141px;height:16px;overflow:hidden;font:12.5px/16px 'Liberation Sans';letter-spacing:0.54px;word-spacing:-0.6px"><div style="left:2px;top:0;white-space:nowrap">94-ФЗ У единственного поставщика</div></div>
<div style="left:492px;top:908.27px;width:168px;height:16px;overflow:hidden;font:12.5px/16px 'Liberation Sans';letter-spacing:0.10px;word-spacing:-0.6px"><div style="left:3px;top:0;white-space:nowrap">#######################</div></div>
<div style="left:662px;top:908.27px;width:109px;height:16px;overflow:hidden;font:12.5px/16px 'Liberation Sans';letter-spacing:0.05px;word-spacing:-0.6px"><div style="left:2px;top:0;white-space:nowrap">0372200273113000010</div></div>
<div style="left:773px;top:908.27px;width:105px;height:16px;overflow:hidden;font:12.5px/16px 'Liberation Sans';letter-spacing:0.05px;word-spacing:-0.6px"><div style="left:2px;top:0;white-space:nowrap">06/71</div></div>
<div style="left:880px;top:908.27px;width:105px;height:16px;overflow:hidden;font:12.5px/16px 'Liberation Sans';letter-spacing:0.58px;word-spacing:-0.6px"><div style="left:2px;top:0;white-space:nowrap">Содержание и текущий ремонт</div></div>
<div style="left:987px;top:908.27px;width:105px;height:16px;overflow:hidden;font:12.5px/16px 'Liberation Sans';letter-spacing:0.05px;word-spacing:-0.6px"><div style="left:2px;top:0;white-space:nowrap">7805017909</div></div>
<div style="left:1094px;top:908.27px;width:105px;height:16px;overflow:hidden;font:12.5px/16px 'Liberation Sans';letter-spacing:0.52px;word-spacing:-0.6px"><div style="left:2px;top:0;white-space:nowrap">Спб ГУП РЭП &quot;Строитель&quot;</div></div>
<div style="left:1201px;top:908.27px;width:135px;height:16px;overflow:hidden;font:12.5px/16px 'Liberation Sans';letter-spacing:0.05px;word-spacing:-0.6px"><div style="left:2px;top:0;white-space:nowrap">15.03.2013</div></div>
<div style="left:1338px;top:908.27px;width:118px;height:16px;overflow:hidden;font:12.5px/16px 'Liberation Sans';letter-spacing:0.05px;word-spacing:-0.6px"><div style="right:0.5px;top:0;white-space:nowrap">184 207,30</div></div>
<div style="left:1458px;top:908.27px;width:102px;height:16px;overflow:hidden;font:12.5px/16px 'Liberation Sans';letter-spacing:0.05px;word-spacing:-0.6px"><div style="right:0.5px;top:0;white-space:nowrap">184 207,30</div></div>
<div style="left:1562px;top:908.27px;width:85px;height:16px;overflow:hidden;font:12.5px/16px 'Liberation Sans';letter-spacing:0.05px;word-spacing:-0.6px"><div style="right:0px;top:0;white-space:nowrap">0</div></div>
<svg style="left:662px;top:905px" width="6" height="6"><path d="M0 0h6L0 6z" fill="#008000"/></svg>
<svg style="left:773px;top:905px" width="6" height="6"><path d="M0 0h6L0 6z" fill="#008000"/></svg>
<svg style="left:987px;top:905px" width="6" height="6"><path d="M0 0h6L0 6z" fill="#008000"/></svg>
<div style="left:13px;top:928.27px;width:188px;height:16px;overflow:hidden;font:12.5px/16px 'Liberation Sans';letter-spacing:0.61px;word-spacing:-0.6px"><div style="left:2.5px;top:0;white-space:nowrap">Санкт-Петербургское государственное бюджетное учреждение</div></div>
<div style="left:203px;top:928.27px;width:144px;height:16px;overflow:hidden;font:12.5px/16px 'Liberation Sans';letter-spacing:0.05px;word-spacing:-0.6px"><div style="left:2px;top:0;white-space:nowrap">0372200273113000004</div></div>
<div style="left:349px;top:928.27px;width:141px;height:16px;overflow:hidden;font:12.5px/16px 'Liberation Sans';letter-spacing:0.62px;word-spacing:-0.6px"><div style="left:2px;top:0;white-space:nowrap">Электронный аукцион</div></div>
<div style="left:492px;top:928.27px;width:168px;height:16px;overflow:hidden;font:12.5px/16px 'Liberation Sans';letter-spacing:0.05px;word-spacing:-0.6px"><div style="left:2px;top:0;white-space:nowrap">-</div></div>
<div style="left:662px;top:928.27px;width:109px;height:16px;overflow:hidden;font:12.5px/16px 'Liberation Sans';letter-spacing:0.05px;word-spacing:-0.6px"><div style="left:2px;top:0;white-space:nowrap">0372200273113000011</div></div>
<div style="left:773px;top:928.27px;width:105px;height:16px;overflow:hidden;font:12.5px/16px 'Liberation Sans';letter-spacing:0.10px;word-spacing:-0.6px"><div style="left:2px;top:0;white-space:nowrap">05/03/2013-А</div></div>
<div style="left:880px;top:928.27px;width:105px;height:16px;overflow:hidden;font:12.5px/16px 'Liberation Sans';letter-spacing:0.58px;word-spacing:-0.6px"><div style="left:2px;top:0;white-space:nowrap">Оказание услуг по</div></div>
<div style="left:987px;top:928.27px;width:105px;height:16px;overflow:hidden;font:12.5px/16px 'Liberation Sans';letter-spacing:0.05px;word-spacing:-0.6px"><div style="left:2px;top:0;white-space:nowrap">7839444955</div></div>
<div style="left:1094px;top:928.27px;width:105px;height:16px;overflow:hidden;font:12.5px/16px 'Liberation Sans';letter-spacing:0.61px;word-spacing:-0.6px"><div style="left:2px;top:0;white-space:nowrap">Торгово-инженерная компания</div></div>
<div style="left:1201px;top:928.27px;width:135px;height:16px;overflow:hidden;font:12.5px/16px 'Liberation Sans';letter-spacing:0.05px;word-spacing:-0.6px"><div style="left:2px;top:0;white-space:nowrap">19.03.2013</div></div>
<div style="left:1338px;top:928.27px;width:118px;height:16px;overflow:hidden;font:12.5px/16px 'Liberation Sans';letter-spacing:0.05px;word-spacing:-0.6px"><div style="right:0.5px;top:0;white-space:nowrap">177 462,20</div></div>
<div style="left:1458px;top:928.27px;width:102px;height:16px;overflow:hidden;font:12.5px/16px 'Liberation Sans';letter-spacing:0.05px;word-spacing:-0.6px"><div style="right:0.5px;top:0;white-space:nowrap">176 568,60</div></div>
<div style="left:1562px;top:928.27px;width:85px;height:16px;overflow:hidden;font:12.5px/16px 'Liberation Sans';letter-spacing:0.05px;word-spacing:-0.6px"><div style="right:0px;top:0;white-space:nowrap">893</div></div>
<svg style="left:203px;top:925px" width="6" height="6"><path d="M0 0h6L0 6z" fill="#008000"/></svg>
<svg style="left:662px;top:925px" width="6" height="6"><path d="M0 0h6L0 6z" fill="#008000"/></svg>
<svg style="left:987px;top:925px" width="6" height="6"><path d="M0 0h6L0 6z" fill="#008000"/></svg>
<div style="left:13px;top:948.27px;width:188px;height:16px;overflow:hidden;font:12.5px/16px 'Liberation Sans';letter-spacing:0.61px;word-spacing:-0.6px"><div style="left:2.5px;top:0;white-space:nowrap">Санкт-Петербургское государственное бюджетное учреждение</div></div>
<div style="left:203px;top:948.27px;width:144px;height:16px;overflow:hidden;font:12.5px/16px 'Liberation Sans';letter-spacing:0.05px;word-spacing:-0.6px"><div style="left:2px;top:0;white-space:nowrap">0372200273113000001</div></div>
<div style="left:349px;top:948.27px;width:141px;height:16px;overflow:hidden;font:12.5px/16px 'Liberation Sans';letter-spacing:0.62px;word-spacing:-0.6px"><div style="left:2px;top:0;white-space:nowrap">Электронный аукцион</div></div>
<div style="left:492px;top:948.27px;width:168px;height:16px;overflow:hidden;font:12.5px/16px 'Liberation Sans';letter-spacing:0.05px;word-spacing:-0.6px"><div style="left:2px;top:0;white-space:nowrap">-</div></div>
<div style="left:662px;top:948.27px;width:109px;height:16px;overflow:hidden;font:12.5px/16px 'Liberation Sans';letter-spacing:0.05px;word-spacing:-0.6px"><div style="left:2px;top:0;white-space:nowrap">0372200273113000012</div></div>
<div style="left:773px;top:948.27px;width:105px;height:16px;overflow:hidden;font:12.5px/16px 'Liberation Sans';letter-spacing:0.10px;word-spacing:-0.6px"><div style="left:2px;top:0;white-space:nowrap">04/03/2013-А</div></div>
<div style="left:880px;top:948.27px;width:105px;height:16px;overflow:hidden;font:12.5px/16px 'Liberation Sans';letter-spacing:0.62px;word-spacing:-0.6px"><div style="left:2px;top:0;white-space:nowrap">Разработка проектной</div></div>
<div style="left:987px;top:948.27px;width:105px;height:16px;overflow:hidden;font:12.5px/16px 'Liberation Sans';letter-spacing:0.05px;word-spacing:-0.6px"><div style="left:2px;top:0;white-space:nowrap">7805528741</div></div>
<div style="left:1094px;top:948.27px;width:105px;height:16px;overflow:hidden;font:12.5px/16px 'Liberation Sans';letter-spacing:0.52px;word-spacing:-0.6px"><div style="left:2px;top:0;white-space:nowrap">ООО «Центр Проект»</div></div>
<div style="left:1201px;top:948.27px;width:135px;height:16px;overflow:hidden;font:12.5px/16px 'Liberation Sans';letter-spacing:0.05px;word-spacing:-0.6px"><div style="left:2px;top:0;white-space:nowrap">19.03.2013</div></div>
<div style="left:1338px;top:948.27px;width:118px;height:16px;overflow:hidden;font:12.5px/16px 'Liberation Sans';letter-spacing:0.05px;word-spacing:-0.6px"><div style="right:0.5px;top:0;white-space:nowrap">255 232,43</div></div>
<div style="left:1458px;top:948.27px;width:102px;height:16px;overflow:hidden;font:12.5px/16px 'Liberation Sans';letter-spacing:0.05px;word-spacing:-0.6px"><div style="right:0.5px;top:0;white-space:nowrap">0,00</div></div>
<div style="left:1562px;top:948.27px;width:85px;height:16px;overflow:hidden;font:12.5px/16px 'Liberation Sans';letter-spacing:0.05px;word-spacing:-0.6px"><div style="right:0px;top:0;white-space:nowrap">0</div></div>
<svg style="left:203px;top:945px" width="6" height="6"><path d="M0 0h6L0 6z" fill="#008000"/></svg>
<svg style="left:662px;top:945px" width="6" height="6"><path d="M0 0h6L0 6z" fill="#008000"/></svg>
<svg style="left:987px;top:945px" width="6" height="6"><path d="M0 0h6L0 6z" fill="#008000"/></svg>
<div style="left:13px;top:968.27px;width:188px;height:16px;overflow:hidden;font:12.5px/16px 'Liberation Sans';letter-spacing:0.61px;word-spacing:-0.6px"><div style="left:2.5px;top:0;white-space:nowrap">Санкт-Петербургское государственное бюджетное учреждение</div></div>
<div style="left:203px;top:968.27px;width:144px;height:16px;overflow:hidden;font:12.5px/16px 'Liberation Sans';letter-spacing:0.05px;word-spacing:-0.6px"><div style="left:2px;top:0;white-space:nowrap">0372200273113000007</div></div>
<div style="left:349px;top:968.27px;width:141px;height:16px;overflow:hidden;font:12.5px/16px 'Liberation Sans';letter-spacing:0.62px;word-spacing:-0.6px"><div style="left:2px;top:0;white-space:nowrap">Электронный аукцион</div></div>
<div style="left:492px;top:968.27px;width:168px;height:16px;overflow:hidden;font:12.5px/16px 'Liberation Sans';letter-spacing:0.05px;word-spacing:-0.6px"><div style="left:2px;top:0;white-space:nowrap">-</div></div>
<div style="left:662px;top:968.27px;width:109px;height:16px;overflow:hidden;font:12.5px/16px 'Liberation Sans';letter-spacing:0.05px;word-spacing:-0.6px"><div style="left:2px;top:0;white-space:nowrap">0372200273113000013</div></div>
<div style="left:773px;top:968.27px;width:105px;height:16px;overflow:hidden;font:12.5px/16px 'Liberation Sans';letter-spacing:0.10px;word-spacing:-0.6px"><div style="left:2px;top:0;white-space:nowrap">06/03/2013-А</div></div>
<div style="left:880px;top:968.27px;width:105px;height:16px;overflow:hidden;font:12.5px/16px 'Liberation Sans';letter-spacing:0.58px;word-spacing:-0.6px"><div style="left:2px;top:0;white-space:nowrap">Оказание услуг по</div></div>
<div style="left:987px;top:968.27px;width:105px;height:16px;overflow:hidden;font:12.5px/16px 'Liberation Sans';letter-spacing:0.05px;word-spacing:-0.6px"><div style="left:2px;top:0;white-space:nowrap">7805217802</div></div>
<div style="left:1094px;top:968.27px;width:105px;height:16px;overflow:hidden;font:12.5px/16px 'Liberation Sans';letter-spacing:0.45px;word-spacing:-0.6px"><div style="left:2px;top:0;white-space:nowrap">&quot; Техно-Дом&quot;</div></div>
<div style="left:1201px;top:968.27px;width:135px;height:16px;overflow:hidden;font:12.5px/16px 'Liberation Sans';letter-spacing:0.05px;word-spacing:-0.6px"><div style="left:2px;top:0;white-space:nowrap">25.03.2013</div></div>
<div style="left:1338px;top:968.27px;width:118px;height:16px;overflow:hidden;font:12.5px/16px 'Liberation Sans';letter-spacing:0.05px;word-spacing:-0.6px"><div style="right:0.5px;top:0;white-space:nowrap">489 870,00</div></div>
<div style="left:1458px;top:968.27px;width:102px;height:16px;overflow:hidden;font:12.5px/16px 'Liberation Sans';letter-spacing:0.05px;word-spacing:-0.6px"><div style="right:0.5px;top:0;white-space:nowrap">142 062,30</div></div>
<div style="left:1562px;top:968.27px;width:85px;height:16px;overflow:hidden;font:12.5px/16px 'Liberation Sans';letter-spacing:0.05px;word-spacing:-0.6px"><div style="right:0px;top:0;white-space:nowrap">347 807</div></div>
<svg style="left:203px;top:965px" width="6" height="6"><path d="M0 0h6L0 6z" fill="#008000"/></svg>
<svg style="left:662px;top:965px" width="6" height="6"><path d="M0 0h6L0 6z" fill="#008000"/></svg>
<svg style="left:987px;top:965px" width="6" height="6"><path d="M0 0h6L0 6z" fill="#008000"/></svg>
<div style="left:13px;top:403px;width:1634px;height:2px;background:#000"></div>
<div style="left:13px;top:423px;width:1634px;height:2px;background:#000"></div>
<div style="left:13px;top:443px;width:1634px;height:2px;background:#000"></div>
<div style="left:13px;top:463px;width:1634px;height:2px;background:#000"></div>
<div style="left:13px;top:483px;width:1634px;height:2px;background:#000"></div>
<div style="left:13px;top:503px;width:1634px;height:2px;background:#000"></div>
<div style="left:13px;top:523px;width:1634px;height:2px;background:#000"></div>
<div style="left:13px;top:543px;width:1634px;height:2px;background:#000"></div>
<div style="left:13px;top:563px;width:1634px;height:2px;background:#000"></div>
<div style="left:13px;top:583px;width:1634px;height:2px;background:#000"></div>
<div style="left:13px;top:603px;width:1634px;height:2px;background:#000"></div>
<div style="left:13px;top:623px;width:1634px;height:2px;background:#000"></div>
<div style="left:13px;top:643px;width:1634px;height:2px;background:#000"></div>
<div style="left:13px;top:663px;width:1634px;height:2px;background:#000"></div>
<div style="left:13px;top:683px;width:1634px;height:2px;background:#000"></div>
<div style="left:13px;top:703px;width:1634px;height:2px;background:#000"></div>
<div style="left:13px;top:723px;width:1634px;height:2px;background:#000"></div>
<div style="left:13px;top:743px;width:1634px;height:2px;background:#000"></div>
<div style="left:13px;top:763px;width:1634px;height:2px;background:#000"></div>
<div style="left:13px;top:783px;width:1634px;height:2px;background:#000"></div>
<div style="left:13px;top:803px;width:1634px;height:2px;background:#000"></div>
<div style="left:13px;top:823px;width:1634px;height:2px;background:#000"></div>
<div style="left:13px;top:843px;width:1634px;height:2px;background:#000"></div>
<div style="left:13px;top:863px;width:1634px;height:2px;background:#000"></div>
<div style="left:13px;top:883px;width:1634px;height:2px;background:#000"></div>
<div style="left:13px;top:903px;width:1634px;height:2px;background:#000"></div>
<div style="left:13px;top:923px;width:1634px;height:2px;background:#000"></div>
<div style="left:13px;top:943px;width:1634px;height:2px;background:#000"></div>
<div style="left:13px;top:963px;width:1634px;height:2px;background:#000"></div>
<div style="left:201px;top:386px;width:2px;height:597px;background:#000"></div>
<div style="left:347px;top:386px;width:2px;height:597px;background:#000"></div>
<div style="left:490px;top:386px;width:2px;height:597px;background:#000"></div>
<div style="left:660px;top:386px;width:2px;height:597px;background:#000"></div>
<div style="left:771px;top:386px;width:2px;height:597px;background:#000"></div>
<div style="left:878px;top:386px;width:2px;height:597px;background:#000"></div>
<div style="left:985px;top:386px;width:2px;height:597px;background:#000"></div>
<div style="left:1092px;top:386px;width:2px;height:597px;background:#000"></div>
<div style="left:1199px;top:386px;width:2px;height:597px;background:#000"></div>
<div style="left:1336px;top:386px;width:2px;height:597px;background:#000"></div>
<div style="left:1456px;top:386px;width:2px;height:597px;background:#000"></div>
<div style="left:1560px;top:386px;width:2px;height:597px;background:#000"></div>
<div style="left:1647px;top:95px;width:18px;height:888px;background:#fff"></div>
<div style="left:1647px;top:95px;width:16px;height:888px;background:linear-gradient(90deg,#e6eefb,#f3f6fd 40%,#eef3fb)"></div>
<div style="left:1647px;top:95px;width:16px;height:5px;background:#ebeaee"></div>
<div style="left:1645px;top:100px;width:18px;height:1px;background:#000"></div>
<div style="left:1648px;top:101px;width:15px;height:17px;background:linear-gradient(#eaf1fd,#d2e0f5 45%,#b9cdec);border:1px solid #9fb5da;border-radius:3px"></div>
<svg style="left:1651px;top:105px" width="10" height="8" viewBox="0 0 10 8"><path d="M1 6l4-4 4 4" fill="none" stroke="#4d6185" stroke-width="2"/></svg>
<div style="left:1648px;top:118px;width:15px;height:307px;background:linear-gradient(90deg,#e2ecfb,#cfdff6 50%,#b9cdeb);border:1px solid #98b1da;border-radius:2px"></div>
<svg style="left:1652px;top:267px" width="9" height="9" viewBox="0 0 9 9"><path d="M1 1.5h6M1 3.5h6M1 5.5h6M1 7.5h6" stroke="#8aa3cc"/></svg>
<div style="left:1648px;top:967px;width:15px;height:16px;background:linear-gradient(#eaf1fd,#d2e0f5 45%,#b9cdec);border:1px solid #9fb5da;border-radius:3px"></div>
<svg style="left:1651px;top:971px" width="10" height="8" viewBox="0 0 10 8"><path d="M1 2l4 4 4-4" fill="none" stroke="#4d6185" stroke-width="2"/></svg>
<div style="left:0px;top:983px;width:1665px;height:17px;background:#ebeaee"></div>
<div style="left:0px;top:983px;width:1647px;height:1px;background:#c9c9ce"></div>
<svg style="left:6px;top:987px" width="8" height="10" viewBox="0 0 8 10"><path d="M6 1v8L1 5z" fill="#000"/></svg>
<svg style="left:23px;top:987px" width="8" height="10" viewBox="0 0 8 10"><path d="M1 1v8l5-4z" fill="#000"/></svg>
<svg style="left:39px;top:987px" width="10" height="10" viewBox="0 0 10 10"><path d="M1 1v8l5-4z" fill="#000"/><rect x="6" y="1" width="1.5" height="8" fill="#000"/></svg>
<div style="left:50px;top:984px;width:1px;height:15px;background:#9d9da3"></div>
<div style="left:0px;top:983px;width:984px;height:1px;background:#a9a9b0"></div>
<svg style="left:50px;top:983px" width="160" height="17"><path d="M0 15.5H150" stroke="#a0a0a8" stroke-width="1"/><path d="M1 0H58L50 15.5H9z" fill="#fff"/><path d="M1.5 0.5L9 15.5M57.5 0.5L50 15.5M54 9l3.5 6.5M106.5 0.5L99 15.5M102.5 9l3.5 6.5M155.5 0.5L148 15.5" fill="none" stroke="#000" stroke-width="1.1"/></svg>
<div style="left:61px;top:985.64px;font:bold 12px/12px 'Liberation Sans';color:#000;white-space:nowrap;">Лист1</div>
<div style="left:111px;top:985.64px;font:normal 12px/12px 'Liberation Sans';color:#000;white-space:nowrap;">Лист2</div>
<div style="left:160px;top:985.64px;font:normal 12px/12px 'Liberation Sans';color:#000;white-space:nowrap;">Лист3</div>
<div style="left:984px;top:984px;width:4px;height:15px;background:#f6f6f8;border-right:1px solid #b8b8bc"></div>
<div style="left:988px;top:984px;width:1px;height:15px;background:#000"></div>
<div style="left:989px;top:984px;width:658px;height:15px;background:linear-gradient(#e6eefb,#f3f6fd 40%,#eef3fb)"></div>
<div style="left:989px;top:984px;width:17px;height:15px;background:linear-gradient(#eaf1fd,#d2e0f5 45%,#b9cdec);border:1px solid #9fb5da;border-radius:3px"></div>
<svg style="left:993px;top:987px" width="9" height="10" viewBox="0 0 9 10"><path d="M6 1L2 5l4 4" fill="none" stroke="#4d6185" stroke-width="2"/></svg>
<div style="left:1006px;top:984px;width:503px;height:15px;background:linear-gradient(#e2ecfb,#cfdff6 50%,#b9cdeb);border:1px solid #98b1da;border-radius:2px"></div>
<svg style="left:1252px;top:988px" width="9" height="7" viewBox="0 0 9 7"><path d="M.5 1v5M2.5 1v5M4.5 1v5M6.5 1v5" stroke="#8aa3cc"/></svg>
<div style="left:1626px;top:984px;width:16px;height:15px;background:linear-gradient(#eaf1fd,#d2e0f5 45%,#b9cdec);border:1px solid #9fb5da;border-radius:3px"></div>
<svg style="left:1630px;top:987px" width="9" height="10" viewBox="0 0 9 10"><path d="M2 1l4 4-4 4" fill="none" stroke="#4d6185" stroke-width="2"/></svg>
<div style="left:1643px;top:984px;width:4px;height:15px;background:#f6f6f8;border-right:1px solid #c0c0c6"></div>
<div style="left:1647px;top:984px;width:1px;height:15px;background:#000"></div>
<div style="left:1648px;top:983px;width:17px;height:17px;background:#ebeaee"></div>
<div style="left:0px;top:999px;width:1665px;height:1px;background:#dcdae0"></div>
<div style="left:0px;top:1000px;width:1665px;height:7px;background:#eae8ee;border-top:1px solid #fbfbfd"></div>
</body></html>
